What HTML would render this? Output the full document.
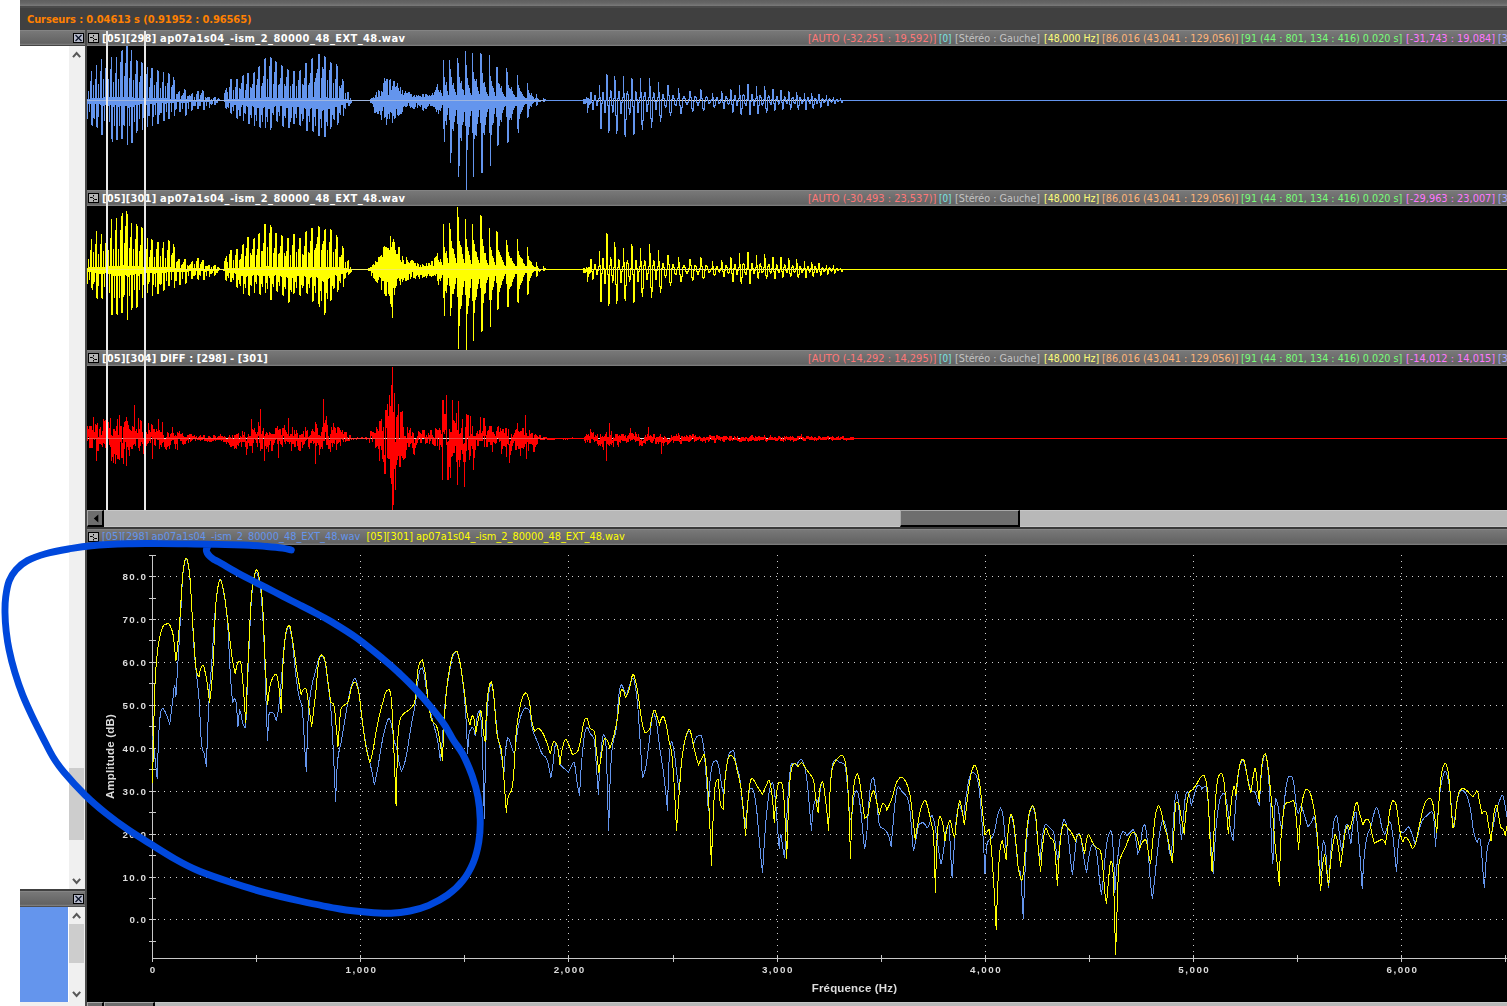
<!DOCTYPE html>
<html lang="fr"><head><meta charset="utf-8"><title>Curseurs</title>
<style>
html,body{margin:0;padding:0;background:#fff;}
body{width:1507px;height:1006px;position:relative;overflow:hidden;font-family:"DejaVu Sans Condensed","Liberation Sans",sans-serif;font-size:11px;}
.abs{position:absolute;}
.hdr{position:absolute;height:16px;background:linear-gradient(#848484 0,#848484 6.2%,#787878 6.3%,#636363 86%,#6a6a6a 91%,#7c7c7c 96%,#7c7c7c 100%);}
.t{position:absolute;white-space:pre;line-height:16px;height:16px;top:1px;}
.tb{font-weight:bold;color:#fff;font-size:11px;letter-spacing:.37px;}
.ib{position:absolute;top:3px;width:9px;height:8px;border:1px solid #000;background:#b4b4b4;}
.cb{position:absolute;top:3px;width:9px;height:8px;border:1px solid #000;background:#b6bacb;}
.r{font-size:11px;}
.c1{color:#ff7878}.c2{color:#78e6e6}.c3{color:#c4c4c4}.c4{color:#ffff78}.c5{color:#ffb478}.c6{color:#78ff78}.c7{color:#ff78ff}.c8{color:#a8a8ff}
.ax{font-family:"Liberation Sans",sans-serif;font-weight:bold;fill:#dcdcdc;}
</style></head><body>
<div class="abs" style="left:20px;top:0;width:1487px;height:6px;background:linear-gradient(#5f5f5f,#666 50%,#7a7a7a 100%)"></div><div class="abs" style="left:20px;top:6px;width:1487px;height:24px;background:#404040;border-top:2px solid #4b4b4b;box-sizing:border-box"></div><div class="abs" style="left:27px;top:12px;height:16px;line-height:16px;color:#ff8000;font-weight:bold;font-size:11px;letter-spacing:-0.1px;white-space:pre" id="curs">Curseurs : 0.04613 s (0.91952 : 0.96565)</div><div class="abs" style="left:69px;top:46px;width:16px;height:843px;background:#f0f0f0"></div><div class="abs" style="left:69px;top:768px;width:15px;height:72px;background:#cdcdcd"></div><div class="abs" style="left:69px;top:907px;width:16px;height:99px;background:#f0f0f0"></div><div class="abs" style="left:69px;top:924px;width:15px;height:39px;background:#cdcdcd"></div><div class="abs" style="left:20px;top:907px;width:48px;height:95px;background:#6495ed"></div><div class="abs" style="left:20px;top:1002px;width:49px;height:4px;background:#f0f0f0"></div><svg class="abs" style="left:0;top:0" width="90" height="1006"><path d="M73 57.1L76.6 53.1L80.2 57.1" fill="none" stroke="#585858" stroke-width="2.1"/><path d="M73 878.9L76.6 882.9L80.2 878.9" fill="none" stroke="#585858" stroke-width="2.1"/><path d="M73 918.1L76.6 914.1L80.2 918.1" fill="none" stroke="#585858" stroke-width="2.1"/><path d="M73 991.9L76.6 995.9L80.2 991.9" fill="none" stroke="#585858" stroke-width="2.1"/></svg><div class="hdr" style="left:20px;top:30px;width:65px;height:15px;border-bottom:1px solid #444"><div class="cb" style="left:53px"></div><svg class="abs" style="left:54px;top:4px" width="9" height="8"><path d="M1.5 1L7.5 7M7.5 1L1.5 7" stroke="#0c1428" stroke-width="1.25"/></svg></div><div class="hdr" style="left:87px;top:30px;width:1420px"><div class="ib" style="left:1px"></div><svg class="abs" style="left:2px;top:4px" width="9" height="8"><path d="M1 3.5H3.5L5.5 5.5H8M4.5 1V2.5M4.5 6V7.5" stroke="#000" stroke-width="1" fill="none"/></svg><span class="t tb" style="left:15px"><span style="letter-spacing:.21px">[05][298] </span><span style="letter-spacing:0.42px">ap07a1s04_-ism_2_80000_48_EXT_48.wav</span></span><span class="t r c1" style="left:721px;transform:scaleX(0.996);transform-origin:0 0">[AUTO (-32,251 : 19,592)]</span><span class="t r c2" style="left:852.3px;transform:scaleX(0.883);transform-origin:0 0">[0]</span><span class="t r c3" style="left:868.1px;transform:scaleX(0.974);transform-origin:0 0">[Stéréo : Gauche]</span><span class="t r c4" style="left:956.6px;transform:scaleX(0.949);transform-origin:0 0">[48,000 Hz]</span><span class="t r c5" style="left:1014.8px;transform:scaleX(0.985);transform-origin:0 0">[86,016 (43,041 : 129,056)]</span><span class="t r c6" style="left:1153.6px;transform:scaleX(0.973);transform-origin:0 0">[91 (44 : 801, 134 : 416) 0.020 s]</span><span class="t r c7" style="left:1319px;transform:scaleX(0.989);transform-origin:0 0">[-31,743 : 19,084]</span><span class="t r c8" style="left:1411.4px;transform:scaleX(0.95);transform-origin:0 0">[3</span></div><div class="hdr" style="left:87px;top:190px;width:1420px"><div class="ib" style="left:1px"></div><svg class="abs" style="left:2px;top:4px" width="9" height="8"><path d="M1 3.5H3.5L5.5 5.5H8M4.5 1V2.5M4.5 6V7.5" stroke="#000" stroke-width="1" fill="none"/></svg><span class="t tb" style="left:15px"><span style="letter-spacing:.21px">[05][301] </span><span style="letter-spacing:0.42px">ap07a1s04_-ism_2_80000_48_EXT_48.wav</span></span><span class="t r c1" style="left:721px;transform:scaleX(0.996);transform-origin:0 0">[AUTO (-30,493 : 23,537)]</span><span class="t r c2" style="left:852.3px;transform:scaleX(0.883);transform-origin:0 0">[0]</span><span class="t r c3" style="left:868.1px;transform:scaleX(0.974);transform-origin:0 0">[Stéréo : Gauche]</span><span class="t r c4" style="left:956.6px;transform:scaleX(0.949);transform-origin:0 0">[48,000 Hz]</span><span class="t r c5" style="left:1014.8px;transform:scaleX(0.985);transform-origin:0 0">[86,016 (43,041 : 129,056)]</span><span class="t r c6" style="left:1153.6px;transform:scaleX(0.973);transform-origin:0 0">[91 (44 : 801, 134 : 416) 0.020 s]</span><span class="t r c7" style="left:1319px;transform:scaleX(0.989);transform-origin:0 0">[-29,963 : 23,007]</span><span class="t r c8" style="left:1411.4px;transform:scaleX(0.95);transform-origin:0 0">[3</span></div><div class="hdr" style="left:87px;top:350px;width:1420px"><div class="ib" style="left:1px"></div><svg class="abs" style="left:2px;top:4px" width="9" height="8"><path d="M1 3.5H3.5L5.5 5.5H8M4.5 1V2.5M4.5 6V7.5" stroke="#000" stroke-width="1" fill="none"/></svg><span class="t tb" style="left:15px"><span style="letter-spacing:.21px">[05][304] </span><span style="letter-spacing:0.05px">DIFF : [298] - [301]</span></span><span class="t r c1" style="left:721px;transform:scaleX(0.996);transform-origin:0 0">[AUTO (-14,292 : 14,295)]</span><span class="t r c2" style="left:852.3px;transform:scaleX(0.883);transform-origin:0 0">[0]</span><span class="t r c3" style="left:868.1px;transform:scaleX(0.974);transform-origin:0 0">[Stéréo : Gauche]</span><span class="t r c4" style="left:956.6px;transform:scaleX(0.949);transform-origin:0 0">[48,000 Hz]</span><span class="t r c5" style="left:1014.8px;transform:scaleX(0.985);transform-origin:0 0">[86,016 (43,041 : 129,056)]</span><span class="t r c6" style="left:1153.6px;transform:scaleX(0.973);transform-origin:0 0">[91 (44 : 801, 134 : 416) 0.020 s]</span><span class="t r c7" style="left:1319px;transform:scaleX(0.989);transform-origin:0 0">[-14,012 : 14,015]</span><span class="t r c8" style="left:1411.4px;transform:scaleX(0.95);transform-origin:0 0">[3</span></div><div class="hdr" style="left:20px;top:889px;width:65px;height:18px;border-top:2px solid #404040;border-bottom:1px solid #505050;box-sizing:border-box"><div class="cb" style="left:53px;top:3px"></div><svg class="abs" style="left:54px;top:4px" width="9" height="8"><path d="M1.5 1L7.5 7M7.5 1L1.5 7" stroke="#0c1428" stroke-width="1.25"/></svg></div><div class="abs" style="left:85px;top:30px;width:2px;height:976px;background:#4a4a4a"></div><svg class="abs" style="left:0;top:0" width="1507" height="1006" viewBox="0 0 1507 1006"><rect x="87" y="46" width="1420" height="144" fill="#000"/><rect x="87" y="206" width="1420" height="144" fill="#000"/><rect x="87" y="366" width="1420" height="144" fill="#000"/><rect x="87" y="544" width="1420" height="458" fill="#000"/><g shape-rendering="crispEdges"><rect x="87" y="100" width="773" height="1" fill="#e4dccf"/><path d="M87.5 99V119M88.5 91V104M89.5 99V112M90.5 81V104M91.5 71V125M92.5 98V126M93.5 85V118M94.5 98V119M95.5 79V104M96.5 65V127M97.5 98V128M98.5 84V117M99.5 98V104M100.5 71V105M101.5 59V135M102.5 98V135M103.5 79V106M104.5 97V121M105.5 68V105M106.5 56V130M107.5 57V128M108.5 79V106M109.5 97V122M110.5 69V105M111.5 57V139M112.5 97V142M113.5 82V107M114.5 97V126M115.5 73V105M116.5 57V140M117.5 97V140M118.5 79V107M119.5 97V126M120.5 62V106M121.5 51V139M122.5 50V139M123.5 97V125M124.5 76V126M125.5 63V106M126.5 46V106M127.5 46V145M128.5 97V108M129.5 78V126M130.5 61V107M131.5 50V143M132.5 97V143M133.5 80V107M134.5 98V122M135.5 74V105M136.5 60V133M137.5 61V131M138.5 98V105M139.5 82V119M140.5 76V104M141.5 62V104M142.5 63V130M143.5 98V118M144.5 83V118M145.5 98V118M146.5 74V105M147.5 67V127M148.5 98V116M149.5 87V116M150.5 78V104M151.5 68V104M152.5 68V126M153.5 98V117M154.5 85V105M155.5 98V115M156.5 82V103M157.5 70V124M158.5 71V124M159.5 98V115M160.5 88V113M161.5 98V113M162.5 82V103M163.5 72V121M164.5 98V121M165.5 86V104M166.5 98V112M167.5 83V103M168.5 73V119M169.5 74V119M170.5 99V103M171.5 87V112M172.5 85V103M173.5 77V103M174.5 80V116M175.5 99V110M176.5 94V109M177.5 94V102M178.5 92V102M179.5 91V112M180.5 99V112M181.5 96V103M182.5 95V109M183.5 93V103M184.5 89V103M185.5 90V116M186.5 99V115M187.5 96V103M188.5 96V109M189.5 95V102M190.5 96V102M191.5 94V111M192.5 93V110M193.5 100V106M194.5 97V106M195.5 100V106M196.5 94V102M197.5 91V109M198.5 91V109M199.5 99V106M200.5 95V106M201.5 93V102M202.5 90V102M203.5 91V110M204.5 100V110M205.5 97V102M206.5 98V106M207.5 97V102M208.5 97V102M209.5 97V108M210.5 100V104M211.5 99V105M212.5 100V104M213.5 98V101M214.5 97V105M215.5 97V105M216.5 100V103M217.5 99V103M218.5 98V101M219.5 99V101M220.5 100V101M221.5 100V101M222.5 100V101M223.5 100V101M224.5 93V102M225.5 90V108M226.5 88V109M227.5 92V107M228.5 99V108M229.5 87V103M230.5 79V113M231.5 79V114M232.5 99V107M233.5 90V111M234.5 99V105M235.5 87V105M236.5 79V118M237.5 79V119M238.5 99V110M239.5 88V116M240.5 89V116M241.5 83V107M242.5 76V105M243.5 75V121M244.5 98V113M245.5 90V114M246.5 84V106M247.5 73V107M248.5 73V124M249.5 98V124M250.5 87V115M251.5 88V118M252.5 84V106M253.5 73V107M254.5 72V126M255.5 98V115M256.5 85V121M257.5 79V108M258.5 67V108M259.5 66V127M260.5 98V128M261.5 86V115M262.5 83V122M263.5 76V108M264.5 59V107M265.5 58V128M266.5 97V117M267.5 79V122M268.5 97V109M269.5 66V109M270.5 57V130M271.5 58V128M272.5 98V113M273.5 84V115M274.5 72V107M275.5 61V106M276.5 62V121M277.5 98V122M278.5 85V112M279.5 84V116M280.5 78V106M281.5 65V106M282.5 66V126M283.5 98V127M284.5 84V116M285.5 86V118M286.5 77V108M287.5 69V108M288.5 70V128M289.5 98V128M290.5 86V122M291.5 98V118M292.5 84V107M293.5 71V124M294.5 71V124M295.5 98V114M296.5 86V118M297.5 98V107M298.5 80V107M299.5 71V125M300.5 70V126M301.5 98V114M302.5 84V121M303.5 85V119M304.5 78V108M305.5 63V109M306.5 63V131M307.5 98V131M308.5 85V116M309.5 83V122M310.5 73V109M311.5 59V108M312.5 58V131M313.5 97V132M314.5 82V117M315.5 78V126M316.5 73V109M317.5 69V109M318.5 54V136M319.5 54V136M320.5 98V119M321.5 78V128M322.5 67V111M323.5 69V110M324.5 56V137M325.5 57V137M326.5 97V122M327.5 80V126M328.5 98V109M329.5 70V109M330.5 62V129M331.5 63V127M332.5 98V115M333.5 83V119M334.5 98V120M335.5 79V107M336.5 64V107M337.5 66V125M338.5 98V123M339.5 86V113M340.5 88V115M341.5 85V105M342.5 79V105M343.5 81V116M344.5 99V108M345.5 93V109M346.5 99V103M347.5 92V103M348.5 92V106M349.5 100V106M350.5 98V104M351.5 100V103M352.5 100V101M353.5 100V101M354.5 100V101M355.5 100V101M356.5 100V101M357.5 100V101M358.5 100V101M359.5 100V101M360.5 100V101M361.5 100V101M362.5 100V101M363.5 100V101M364.5 100V101M365.5 100V101M366.5 100V101M367.5 100V101M368.5 100V101M369.5 100V101M370.5 99V103M371.5 98V103M372.5 98V104M373.5 97V107M374.5 98V113M375.5 95V113M376.5 92V112M377.5 97V114M378.5 90V114M379.5 91V111M380.5 96V115M381.5 91V120M382.5 92V111M383.5 83V107M384.5 78V118M385.5 81V117M386.5 79V125M387.5 79V119M388.5 95V114M389.5 80V119M390.5 79V112M391.5 90V113M392.5 86V123M393.5 81V116M394.5 81V119M395.5 87V118M396.5 86V109M397.5 83V115M398.5 88V116M399.5 91V115M400.5 87V114M401.5 94V114M402.5 90V112M403.5 95V107M404.5 93V106M405.5 91V107M406.5 93V107M407.5 93V106M408.5 92V103M409.5 92V106M410.5 94V108M411.5 94V107M412.5 97V108M413.5 96V109M414.5 95V109M415.5 97V107M416.5 95V103M417.5 96V108M418.5 95V105M419.5 96V106M420.5 96V107M421.5 97V105M422.5 94V110M423.5 94V111M424.5 97V108M425.5 94V109M426.5 94V109M427.5 95V107M428.5 96V106M429.5 95V104M430.5 96V106M431.5 95V106M432.5 93V106M433.5 95V107M434.5 92V107M435.5 90V109M436.5 87V112M437.5 84V110M438.5 90V114M439.5 92V110M440.5 90V111M441.5 93V108M442.5 96V105M443.5 60V129M444.5 77V142M445.5 85V121M446.5 82V125M447.5 91V115M448.5 95V108M449.5 60V120M450.5 69V163M451.5 77V153M452.5 85V129M453.5 83V131M454.5 89V122M455.5 92V116M456.5 95V110M457.5 58V124M458.5 63V177M459.5 77V166M460.5 83V138M461.5 81V141M462.5 89V125M463.5 90V122M464.5 95V112M465.5 51V126M466.5 65V190M467.5 78V150M468.5 85V135M469.5 88V127M470.5 93V116M471.5 95V111M472.5 53V133M473.5 72V177M474.5 79V139M475.5 81V135M476.5 79V136M477.5 87V124M478.5 91V117M479.5 94V110M480.5 53V123M481.5 54V173M482.5 73V173M483.5 83V133M484.5 82V135M485.5 87V125M486.5 92V117M487.5 94V112M488.5 96V109M489.5 55V133M490.5 76V166M491.5 81V135M492.5 86V125M493.5 88V123M494.5 92V114M495.5 96V108M496.5 67V117M497.5 67V146M498.5 83V145M499.5 84V126M500.5 88V120M501.5 86V122M502.5 92V113M503.5 94V110M504.5 96V107M505.5 97V106M506.5 68V117M507.5 72V143M508.5 85V142M509.5 88V120M510.5 89V118M511.5 87V120M512.5 91V114M513.5 94V110M514.5 95V108M515.5 97V106M516.5 97V106M517.5 75V129M518.5 85V133M519.5 88V119M520.5 91V114M521.5 92V112M522.5 94V110M523.5 96V107M524.5 97V105M525.5 98V104M526.5 98V104M527.5 83V118M528.5 90V117M529.5 93V109M530.5 95V106M531.5 93V107M532.5 96V104M533.5 97V103M534.5 99V102M535.5 98V102M536.5 94V106M537.5 98V105M538.5 99V102M539.5 100V102M540.5 100V102M541.5 100V101M542.5 100V101M543.5 98V102M544.5 99V102M545.5 99V101M546.5 100V101M547.5 100V101M548.5 100V101M549.5 100V101M550.5 100V101M551.5 100V101M552.5 100V101M553.5 100V101M554.5 100V101M555.5 100V101M556.5 100V101M557.5 100V101M558.5 100V101M559.5 100V101M560.5 100V101M561.5 100V101M562.5 100V101M563.5 100V101M564.5 100V101M565.5 100V101M566.5 100V101M567.5 100V101M568.5 100V101M569.5 100V101M570.5 100V101M571.5 100V101M572.5 100V101M573.5 100V101M574.5 100V101M575.5 100V101M576.5 100V101M577.5 100V101M578.5 100V101M579.5 100V101M580.5 100V101M581.5 100V101M582.5 100V101M583.5 99V104M584.5 99V104M585.5 99V104M586.5 97V103M587.5 98V113M588.5 98V108M589.5 99V105M590.5 92V104M591.5 92V103M592.5 102V110M593.5 100V110M594.5 95V101M595.5 95V101M596.5 100V106M597.5 101V106M598.5 98V102M599.5 85V99M600.5 97V129M601.5 103V129M602.5 92V104M603.5 92V101M604.5 100V113M605.5 100V113M606.5 74V101M607.5 75V106M608.5 105V133M609.5 97V131M610.5 90V98M611.5 91V106M612.5 105V113M613.5 98V112M614.5 76V99M615.5 80V116M616.5 115V134M617.5 98V131M618.5 91V99M619.5 91V101M620.5 100V114M621.5 102V114M622.5 97V103M623.5 76V98M624.5 93V135M625.5 119V137M626.5 93V120M627.5 91V95M628.5 94V109M629.5 108V115M630.5 99V113M631.5 78V100M632.5 79V107M633.5 106V135M634.5 100V134M635.5 91V101M636.5 92V100M637.5 99V113M638.5 102V113M639.5 97V103M640.5 78V98M641.5 92V125M642.5 120V130M643.5 96V121M644.5 92V97M645.5 92V101M646.5 100V112M647.5 104V112M648.5 97V105M649.5 78V98M650.5 86V119M651.5 118V128M652.5 97V122M653.5 92V98M654.5 93V102M655.5 101V110M656.5 101V110M657.5 97V102M658.5 82V98M659.5 92V116M660.5 115V122M661.5 99V118M662.5 94V100M663.5 94V99M664.5 98V106M665.5 105V108M666.5 100V107M667.5 85V101M668.5 85V96M669.5 95V113M670.5 112V116M671.5 99V113M672.5 95V100M673.5 95V99M674.5 98V105M675.5 104V106M676.5 100V106M677.5 98V101M678.5 88V99M679.5 93V106M680.5 105V114M681.5 107V114M682.5 98V108M683.5 96V99M684.5 96V99M685.5 98V103M686.5 102V105M687.5 102V105M688.5 99V103M689.5 91V100M690.5 91V98M691.5 97V109M692.5 108V112M693.5 101V111M694.5 96V102M695.5 96V98M696.5 97V103M697.5 102V106M698.5 102V106M699.5 99V103M700.5 89V100M701.5 90V99M702.5 98V109M703.5 108V111M704.5 101V110M705.5 97V102M706.5 96V98M707.5 97V101M708.5 100V104M709.5 102V104M710.5 100V103M711.5 99V101M712.5 93V100M713.5 97V107M714.5 105V108M715.5 99V106M716.5 97V100M717.5 97V101M718.5 100V104M719.5 102V104M720.5 99V103M721.5 91V100M722.5 93V103M723.5 102V109M724.5 101V109M725.5 96V102M726.5 96V99M727.5 98V104M728.5 103V105M729.5 99V104M730.5 89V100M731.5 90V105M732.5 104V113M733.5 99V112M734.5 95V100M735.5 95V101M736.5 100V106M737.5 101V106M738.5 98V102M739.5 85V99M740.5 95V114M741.5 108V115M742.5 95V109M743.5 94V96M744.5 95V104M745.5 103V106M746.5 99V106M747.5 84V100M748.5 84V101M749.5 100V115M750.5 101V115M751.5 94V102M752.5 94V100M753.5 99V106M754.5 101V106M755.5 98V102M756.5 86V99M757.5 96V114M758.5 105V114M759.5 95V106M760.5 95V98M761.5 97V105M762.5 103V106M763.5 99V104M764.5 86V100M765.5 90V109M766.5 108V113M767.5 97V111M768.5 95V98M769.5 96V103M770.5 102V105M771.5 99V105M772.5 89V100M773.5 89V104M774.5 103V111M775.5 99V110M776.5 96V100M777.5 96V102M778.5 101V105M779.5 100V104M780.5 90V101M781.5 90V103M782.5 102V110M783.5 99V109M784.5 96V100M785.5 97V102M786.5 101V104M787.5 99V104M788.5 91V100M789.5 92V105M790.5 104V110M791.5 98V108M792.5 97V99M793.5 97V103M794.5 102V104M795.5 99V104M796.5 92V100M797.5 95V108M798.5 105V110M799.5 97V106M800.5 97V100M801.5 99V104M802.5 101V104M803.5 99V102M804.5 93V100M805.5 99V110M806.5 100V110M807.5 97V101M808.5 97V102M809.5 101V104M810.5 99V104M811.5 93V100M812.5 96V108M813.5 104V109M814.5 98V105M815.5 98V100M816.5 99V104M817.5 100V104M818.5 94V101M819.5 94V103M820.5 102V108M821.5 99V107M822.5 98V100M823.5 99V103M824.5 101V103M825.5 99V102M826.5 95V101M827.5 100V106M828.5 99V106M829.5 98V100M830.5 99V102M831.5 101V103M832.5 99V102M833.5 97V101M834.5 100V104M835.5 100V104M836.5 99V101M837.5 99V102M838.5 100V102M839.5 100V101M840.5 98V101M841.5 100V103M842.5 100V103M843.5 100V101M844.5 100V101M845.5 100V101M846.5 100V101M847.5 100V101M848.5 100V101M849.5 100V101M850.5 100V101M851.5 100V101M852.5 100V101M853.5 100V101M854.5 100V101M855.5 100V101M856.5 100V101M857.5 100V101M858.5 100V101M859.5 100V101" stroke="#6495ed" stroke-width="1" fill="none"/><rect x="860" y="100" width="647" height="1" fill="#6495ed"/><rect x="87" y="100" width="458" height="1" fill="#e4dccf" opacity="0.45"/></g><g shape-rendering="crispEdges"><rect x="87" y="269" width="773" height="1" fill="#e4dccf"/><path d="M87.5 268V284M88.5 259V272M89.5 267V280M90.5 250V272M91.5 239V288M92.5 267V290M93.5 252V284M94.5 267V282M95.5 244V273M96.5 231V298M97.5 267V299M98.5 254V286M99.5 267V274M100.5 244V274M101.5 234V298M102.5 267V299M103.5 251V274M104.5 267V287M105.5 243V273M106.5 224V300M107.5 224V299M108.5 250V274M109.5 266V293M110.5 238V274M111.5 219V315M112.5 266V315M113.5 249V276M114.5 266V298M115.5 230V276M116.5 218V314M117.5 266V315M118.5 249V276M119.5 266V298M120.5 230V276M121.5 216V313M122.5 213V313M123.5 265V297M124.5 243V295M125.5 226V275M126.5 211V276M127.5 214V320M128.5 266V277M129.5 248V296M130.5 237V275M131.5 223V310M132.5 266V308M133.5 249V275M134.5 266V290M135.5 239V274M136.5 224V308M137.5 226V307M138.5 266V276M139.5 251V290M140.5 245V274M141.5 227V274M142.5 228V298M143.5 267V285M144.5 253V284M145.5 267V283M146.5 249V273M147.5 238V293M148.5 267V284M149.5 257V282M150.5 250V273M151.5 239V273M152.5 240V296M153.5 267V285M154.5 257V274M155.5 267V287M156.5 249V273M157.5 242V294M158.5 242V294M159.5 267V284M160.5 256V285M161.5 267V284M162.5 248V273M163.5 242V291M164.5 267V290M165.5 258V273M166.5 267V281M167.5 250V272M168.5 240V286M169.5 241V286M170.5 267V272M171.5 255V280M172.5 253V272M173.5 244V272M174.5 247V288M175.5 268V281M176.5 262V281M177.5 261V272M178.5 259V272M179.5 259V285M180.5 268V285M181.5 265V272M182.5 264V279M183.5 262V272M184.5 259V272M185.5 259V284M186.5 269V283M187.5 265V272M188.5 266V276M189.5 265V271M190.5 264V271M191.5 262V279M192.5 261V279M193.5 268V276M194.5 264V276M195.5 268V275M196.5 261V271M197.5 258V279M198.5 258V280M199.5 268V275M200.5 264V276M201.5 262V271M202.5 260V271M203.5 260V280M204.5 269V280M205.5 266V272M206.5 266V276M207.5 266V271M208.5 265V271M209.5 265V277M210.5 269V274M211.5 267V274M212.5 269V273M213.5 266V271M214.5 265V276M215.5 265V275M216.5 269V273M217.5 267V273M218.5 267V271M219.5 268V270M220.5 269V270M221.5 269V270M222.5 269V270M223.5 269V271M224.5 261V271M225.5 258V280M226.5 256V281M227.5 262V276M228.5 268V278M229.5 254V273M230.5 250V282M231.5 250V282M232.5 268V278M233.5 260V280M234.5 268V273M235.5 255V274M236.5 249V287M237.5 249V288M238.5 268V280M239.5 260V284M240.5 259V286M241.5 254V276M242.5 245V276M243.5 244V294M244.5 267V284M245.5 256V288M246.5 248V277M247.5 237V276M248.5 237V295M249.5 267V296M250.5 253V285M251.5 255V286M252.5 249V276M253.5 239V275M254.5 238V293M255.5 267V282M256.5 255V284M257.5 249V275M258.5 234V276M259.5 233V294M260.5 267V295M261.5 251V284M262.5 251V287M263.5 243V276M264.5 224V276M265.5 224V293M266.5 266V283M267.5 247V289M268.5 266V276M269.5 233V278M270.5 225V300M271.5 227V300M272.5 267V284M273.5 253V287M274.5 248V276M275.5 233V275M276.5 233V291M277.5 267V292M278.5 254V282M279.5 253V286M280.5 246V276M281.5 235V277M282.5 236V295M283.5 267V296M284.5 253V287M285.5 256V289M286.5 251V277M287.5 238V278M288.5 238V303M289.5 267V302M290.5 255V290M291.5 267V292M292.5 245V278M293.5 234V294M294.5 234V293M295.5 267V282M296.5 252V288M297.5 267V276M298.5 249V276M299.5 238V295M300.5 238V296M301.5 267V285M302.5 254V288M303.5 255V286M304.5 246V276M305.5 232V277M306.5 231V293M307.5 267V294M308.5 252V284M309.5 253V288M310.5 241V278M311.5 228V277M312.5 228V302M313.5 267V301M314.5 250V286M315.5 248V293M316.5 244V277M317.5 237V278M318.5 226V304M319.5 227V307M320.5 267V291M321.5 250V301M322.5 244V281M323.5 241V282M324.5 230V315M325.5 229V313M326.5 267V293M327.5 250V299M328.5 267V279M329.5 242V278M330.5 229V301M331.5 230V300M332.5 267V286M333.5 252V289M334.5 267V288M335.5 249V275M336.5 235V276M337.5 237V292M338.5 267V290M339.5 257V281M340.5 257V283M341.5 255V274M342.5 246V274M343.5 248V287M344.5 268V279M345.5 262V278M346.5 268V273M347.5 261V272M348.5 260V275M349.5 269V274M350.5 267V273M351.5 269V272M352.5 269V270M353.5 269V270M354.5 269V270M355.5 269V270M356.5 269V270M357.5 269V270M358.5 269V270M359.5 269V270M360.5 269V270M361.5 269V270M362.5 269V270M363.5 269V270M364.5 269V270M365.5 269V270M366.5 269V270M367.5 269V270M368.5 268V271M369.5 268V271M370.5 267V271M371.5 267V276M372.5 265V273M373.5 264V278M374.5 265V279M375.5 261V281M376.5 262V282M377.5 262V283M378.5 257V280M379.5 257V277M380.5 256V278M381.5 255V290M382.5 257V281M383.5 247V281M384.5 246V294M385.5 247V296M386.5 247V296M387.5 248V282M388.5 248V294M389.5 250V296M390.5 236V304M391.5 247V307M392.5 242V318M393.5 239V288M394.5 242V295M395.5 250V288M396.5 254V286M397.5 254V279M398.5 247V278M399.5 247V281M400.5 260V285M401.5 262V279M402.5 256V282M403.5 260V280M404.5 264V278M405.5 264V281M406.5 257V281M407.5 260V280M408.5 262V280M409.5 263V274M410.5 261V279M411.5 260V277M412.5 260V272M413.5 261V278M414.5 263V278M415.5 263V279M416.5 266V276M417.5 263V275M418.5 264V277M419.5 267V279M420.5 265V275M421.5 267V275M422.5 264V278M423.5 265V277M424.5 266V277M425.5 266V276M426.5 263V278M427.5 266V276M428.5 263V274M429.5 263V276M430.5 265V276M431.5 261V277M432.5 261V276M433.5 266V276M434.5 258V275M435.5 257V276M436.5 256V274M437.5 253V281M438.5 260V285M439.5 262V279M440.5 259V281M441.5 262V278M442.5 265V275M443.5 224V298M444.5 247V316M445.5 253V291M446.5 251V293M447.5 258V285M448.5 263V278M449.5 223V286M450.5 229V316M451.5 241V308M452.5 248V294M453.5 249V294M454.5 254V289M455.5 258V284M456.5 263V278M457.5 207V297M458.5 217V349M459.5 241V326M460.5 245V309M461.5 247V306M462.5 254V295M463.5 259V287M464.5 263V281M465.5 219V295M466.5 239V350M467.5 247V314M468.5 251V306M469.5 255V298M470.5 260V288M471.5 264V279M472.5 224V301M473.5 240V341M474.5 244V313M475.5 251V300M476.5 252V297M477.5 257V289M478.5 260V284M479.5 263V279M480.5 215V288M481.5 216V332M482.5 239V331M483.5 246V303M484.5 253V294M485.5 253V293M486.5 260V283M487.5 263V280M488.5 265V277M489.5 228V300M490.5 247V327M491.5 250V300M492.5 256V290M493.5 258V287M494.5 262V281M495.5 265V276M496.5 231V283M497.5 232V310M498.5 250V309M499.5 252V292M500.5 255V288M501.5 257V285M502.5 260V281M503.5 262V279M504.5 265V276M505.5 266V274M506.5 240V284M507.5 245V307M508.5 252V307M509.5 256V289M510.5 258V287M511.5 258V286M512.5 261V282M513.5 263V279M514.5 264V277M515.5 266V274M516.5 266V274M517.5 239V302M518.5 251V303M519.5 255V289M520.5 257V285M521.5 258V283M522.5 259V281M523.5 263V277M524.5 264V275M525.5 266V273M526.5 266V273M527.5 247V295M528.5 256V294M529.5 260V281M530.5 261V278M531.5 262V276M532.5 265V273M533.5 266V272M534.5 267V271M535.5 267V271M536.5 262V277M537.5 266V276M538.5 268V271M539.5 269V272M540.5 269V271M541.5 269V270M542.5 269V270M543.5 266V271M544.5 268V271M545.5 268V270M546.5 269V270M547.5 269V270M548.5 269V270M549.5 269V270M550.5 269V270M551.5 269V270M552.5 269V270M553.5 269V270M554.5 269V270M555.5 269V270M556.5 269V270M557.5 269V270M558.5 269V270M559.5 269V270M560.5 269V270M561.5 269V270M562.5 269V270M563.5 269V270M564.5 269V270M565.5 269V270M566.5 269V270M567.5 269V270M568.5 269V270M569.5 269V270M570.5 269V270M571.5 269V270M572.5 269V270M573.5 269V270M574.5 269V270M575.5 269V270M576.5 269V270M577.5 269V270M578.5 269V270M579.5 269V270M580.5 269V270M581.5 269V270M582.5 269V270M583.5 268V273M584.5 268V273M585.5 269V273M586.5 267V272M587.5 268V282M588.5 267V277M589.5 267V274M590.5 259V273M591.5 259V272M592.5 271V280M593.5 269V279M594.5 264V270M595.5 264V270M596.5 269V275M597.5 270V275M598.5 266V271M599.5 251V267M600.5 265V302M601.5 273V302M602.5 258V274M603.5 258V269M604.5 268V284M605.5 269V284M606.5 233V270M607.5 234V275M608.5 274V306M609.5 265V304M610.5 257V266M611.5 259V276M612.5 275V283M613.5 267V281M614.5 242V268M615.5 247V285M616.5 284V304M617.5 267V301M618.5 259V268M619.5 260V270M620.5 269V283M621.5 271V283M622.5 266V272M623.5 248V267M624.5 262V299M625.5 285V301M626.5 262V286M627.5 260V264M628.5 263V277M629.5 276V282M630.5 268V280M631.5 244V269M632.5 246V275M633.5 274V303M634.5 269V302M635.5 260V270M636.5 260V269M637.5 268V282M638.5 271V282M639.5 266V272M640.5 248V267M641.5 261V293M642.5 288V297M643.5 265V289M644.5 260V266M645.5 261V270M646.5 269V280M647.5 273V280M648.5 266V274M649.5 244V267M650.5 253V288M651.5 287V298M652.5 265V292M653.5 260V266M654.5 261V271M655.5 270V280M656.5 270V280M657.5 266V271M658.5 250V267M659.5 261V287M660.5 286V293M661.5 268V289M662.5 263V269M663.5 263V268M664.5 267V276M665.5 275V278M666.5 269V276M667.5 255V270M668.5 255V265M669.5 264V283M670.5 282V286M671.5 268V283M672.5 264V269M673.5 264V268M674.5 267V274M675.5 273V275M676.5 269V275M677.5 267V270M678.5 257V268M679.5 262V275M680.5 274V282M681.5 276V282M682.5 267V277M683.5 265V268M684.5 265V268M685.5 267V272M686.5 271V274M687.5 271V274M688.5 268V272M689.5 259V269M690.5 259V266M691.5 265V278M692.5 277V281M693.5 270V280M694.5 265V271M695.5 265V267M696.5 266V272M697.5 271V275M698.5 271V275M699.5 268V272M700.5 257V269M701.5 258V267M702.5 266V278M703.5 277V279M704.5 270V278M705.5 265V271M706.5 265V267M707.5 266V270M708.5 269V273M709.5 271V273M710.5 269V272M711.5 268V270M712.5 261V269M713.5 266V275M714.5 274V276M715.5 268V275M716.5 266V269M717.5 266V270M718.5 269V272M719.5 270V273M720.5 268V271M721.5 260V269M722.5 262V272M723.5 271V277M724.5 270V277M725.5 265V271M726.5 265V268M727.5 267V273M728.5 272V274M729.5 268V273M730.5 257V269M731.5 258V274M732.5 273V282M733.5 268V282M734.5 264V269M735.5 264V270M736.5 269V275M737.5 270V275M738.5 267V271M739.5 253V268M740.5 264V282M741.5 277V284M742.5 264V278M743.5 263V265M744.5 264V273M745.5 272V275M746.5 268V275M747.5 252V269M748.5 252V270M749.5 269V284M750.5 270V284M751.5 263V271M752.5 263V269M753.5 268V274M754.5 270V274M755.5 267V271M756.5 255V268M757.5 265V278M758.5 272V279M759.5 264V273M760.5 263V267M761.5 266V273M762.5 271V273M763.5 267V272M764.5 254V268M765.5 258V276M766.5 275V279M767.5 266V277M768.5 264V267M769.5 264V272M770.5 271V274M771.5 268V273M772.5 257V269M773.5 257V272M774.5 271V279M775.5 268V279M776.5 264V269M777.5 265V271M778.5 270V273M779.5 269V273M780.5 257V270M781.5 257V272M782.5 271V278M783.5 267V277M784.5 264V268M785.5 265V271M786.5 270V273M787.5 268V273M788.5 258V269M789.5 260V274M790.5 273V277M791.5 267V276M792.5 265V268M793.5 266V272M794.5 271V273M795.5 268V272M796.5 259V269M797.5 263V277M798.5 274V278M799.5 266V275M800.5 266V269M801.5 268V273M802.5 270V273M803.5 268V271M804.5 261V269M805.5 268V278M806.5 269V278M807.5 266V270M808.5 266V271M809.5 270V273M810.5 268V272M811.5 262V269M812.5 264V276M813.5 272V277M814.5 266V273M815.5 266V269M816.5 268V273M817.5 269V273M818.5 263V270M819.5 263V272M820.5 271V276M821.5 268V275M822.5 267V269M823.5 268V272M824.5 270V272M825.5 268V271M826.5 265V270M827.5 269V275M828.5 268V274M829.5 267V269M830.5 268V271M831.5 270V272M832.5 268V271M833.5 265V270M834.5 269V274M835.5 269V273M836.5 268V270M837.5 268V271M838.5 269V271M839.5 269V270M840.5 268V270M841.5 269V272M842.5 269V272M843.5 269V270M844.5 269V270M845.5 269V270M846.5 269V270M847.5 269V270M848.5 269V270M849.5 269V270M850.5 269V270M851.5 269V270M852.5 269V270M853.5 269V270M854.5 269V270M855.5 269V270M856.5 269V270M857.5 269V270M858.5 269V270M859.5 269V270" stroke="#ffff00" stroke-width="1" fill="none"/><rect x="860" y="269" width="647" height="1" fill="#ffff00"/><rect x="87" y="269" width="458" height="1" fill="#e4dccf" opacity="0.45"/></g><g shape-rendering="crispEdges"><rect x="87" y="438" width="773" height="1" fill="#e4dccf"/><path d="M87.5 426V441M88.5 429V437M89.5 426V448M90.5 426V448M91.5 426V448M92.5 430V448M93.5 417V439M94.5 432V440M95.5 424V439M96.5 425V461M97.5 423V451M98.5 437V451M99.5 429V444M100.5 427V444M101.5 435V445M102.5 431V447M103.5 419V443M104.5 421V444M105.5 420V448M106.5 419V448M107.5 423V437M108.5 422V439M109.5 428V445M110.5 418V447M111.5 435V461M112.5 436V457M113.5 429V463M114.5 429V454M115.5 431V464M116.5 426V455M117.5 419V459M118.5 435V459M119.5 415V460M120.5 426V442M121.5 426V458M122.5 443V458M123.5 427V464M124.5 422V449M125.5 421V442M126.5 417V466M127.5 421V447M128.5 425V450M129.5 429V456M130.5 430V447M131.5 431V449M132.5 426V449M133.5 427V445M134.5 405V444M135.5 431V446M136.5 429V439M137.5 433V439M138.5 418V448M139.5 429V451M140.5 420V446M141.5 421V442M142.5 432V444M143.5 438V454M144.5 437V453M145.5 437V448M146.5 432V446M147.5 434V444M148.5 423V443M149.5 430V441M150.5 432V443M151.5 424V437M152.5 425V459M153.5 429V439M154.5 429V445M155.5 432V446M156.5 429V439M157.5 431V440M158.5 419V440M159.5 430V449M160.5 432V445M161.5 432V447M162.5 422V443M163.5 435V442M164.5 439V447M165.5 439V449M166.5 437V450M167.5 432V447M168.5 433V446M169.5 437V449M170.5 434V445M171.5 433V441M172.5 427V440M173.5 433V440M174.5 436V444M175.5 435V449M176.5 436V444M177.5 432V450M178.5 433V439M179.5 431V439M180.5 434V441M181.5 434V441M182.5 433V444M183.5 436V445M184.5 437V444M185.5 437V444M186.5 437V441M187.5 435V440M188.5 435V443M189.5 434V438M190.5 434V442M191.5 434V441M192.5 436V440M193.5 436V439M194.5 435V439M195.5 437V441M196.5 436V439M197.5 438V440M198.5 437V440M199.5 436V440M200.5 435V441M201.5 437V440M202.5 437V440M203.5 435V439M204.5 435V441M205.5 438V441M206.5 438V441M207.5 438V442M208.5 436V441M209.5 436V442M210.5 437V442M211.5 438V442M212.5 438V441M213.5 435V441M214.5 435V440M215.5 436V441M216.5 438V440M217.5 437V440M218.5 436V440M219.5 436V440M220.5 434V440M221.5 436V441M222.5 436V440M223.5 437V442M224.5 436V442M225.5 437V442M226.5 439V444M227.5 439V442M228.5 437V443M229.5 435V445M230.5 437V447M231.5 438V447M232.5 435V446M233.5 439V446M234.5 435V449M235.5 435V448M236.5 434V449M237.5 434V445M238.5 433V446M239.5 439V443M240.5 436V442M241.5 437V447M242.5 431V442M243.5 435V442M244.5 432V442M245.5 437V447M246.5 441V455M247.5 437V449M248.5 434V443M249.5 436V446M250.5 436V446M251.5 419V446M252.5 429V453M253.5 430V443M254.5 428V439M255.5 432V440M256.5 434V443M257.5 432V447M258.5 422V436M259.5 426V443M260.5 409V451M261.5 434V449M262.5 431V449M263.5 428V438M264.5 436V461M265.5 434V446M266.5 432V449M267.5 433V447M268.5 435V452M269.5 432V445M270.5 433V441M271.5 434V451M272.5 434V451M273.5 434V445M274.5 434V443M275.5 428V440M276.5 428V439M277.5 426V444M278.5 430V458M279.5 429V441M280.5 429V444M281.5 435V445M282.5 428V447M283.5 428V436M284.5 425V442M285.5 430V444M286.5 432V441M287.5 434V442M288.5 418V442M289.5 436V444M290.5 434V442M291.5 434V451M292.5 427V444M293.5 436V444M294.5 430V447M295.5 434V447M296.5 430V441M297.5 433V446M298.5 438V450M299.5 435V451M300.5 435V451M301.5 434V442M302.5 434V448M303.5 431V445M304.5 437V444M305.5 427V441M306.5 431V440M307.5 430V439M308.5 437V447M309.5 436V449M310.5 435V443M311.5 431V443M312.5 429V441M313.5 431V444M314.5 432V443M315.5 422V464M316.5 424V446M317.5 428V443M318.5 435V445M319.5 435V455M320.5 436V449M321.5 432V447M322.5 427V449M323.5 399V441M324.5 423V441M325.5 420V432M326.5 416V445M327.5 425V445M328.5 436V449M329.5 440V449M330.5 434V452M331.5 427V443M332.5 430V447M333.5 423V443M334.5 427V444M335.5 428V440M336.5 433V450M337.5 427V444M338.5 427V443M339.5 428V442M340.5 430V446M341.5 432V439M342.5 430V440M343.5 434V442M344.5 432V438M345.5 432V442M346.5 432V441M347.5 437V441M348.5 439V441M349.5 435V441M350.5 435V439M351.5 438V440M352.5 438V439M353.5 438V440M354.5 438V439M355.5 438V439M356.5 438V440M357.5 437V439M358.5 438V439M359.5 438V439M360.5 438V439M361.5 437V439M362.5 437V439M363.5 438V439M364.5 438V439M365.5 437V439M366.5 437V440M367.5 438V439M368.5 438V439M369.5 438V443M370.5 431V439M371.5 431V436M372.5 432V442M373.5 432V439M374.5 433V439M375.5 433V448M376.5 427V447M377.5 429V446M378.5 431V449M379.5 421V461M380.5 421V446M381.5 419V450M382.5 431V459M383.5 427V462M384.5 455V474M385.5 410V474M386.5 410V428M387.5 404V458M388.5 416V459M389.5 395V459M390.5 406V478M391.5 385V484M392.5 367V510M393.5 412V505M394.5 393V469M395.5 442V490M396.5 417V465M397.5 415V460M398.5 404V456M399.5 439V467M400.5 412V467M401.5 412V456M402.5 411V458M403.5 427V460M404.5 436V459M405.5 436V458M406.5 438V450M407.5 427V443M408.5 433V447M409.5 430V447M410.5 428V444M411.5 436V443M412.5 432V448M413.5 433V454M414.5 443V455M415.5 439V448M416.5 438V445M417.5 436V443M418.5 431V440M419.5 432V438M420.5 433V443M421.5 434V443M422.5 430V438M423.5 430V438M424.5 430V439M425.5 437V444M426.5 435V443M427.5 437V443M428.5 433V439M429.5 435V444M430.5 430V441M431.5 430V439M432.5 435V444M433.5 437V445M434.5 438V446M435.5 428V446M436.5 429V439M437.5 430V446M438.5 430V438M439.5 428V450M440.5 430V445M441.5 434V447M442.5 400V480M443.5 400V432M444.5 414V434M445.5 414V430M446.5 395V445M447.5 442V480M448.5 441V480M449.5 429V467M450.5 432V478M451.5 432V457M452.5 400V456M453.5 420V453M454.5 421V453M455.5 423V446M456.5 413V462M457.5 430V485M458.5 401V460M459.5 434V467M460.5 433V460M461.5 428V450M462.5 419V454M463.5 444V462M464.5 443V487M465.5 427V462M466.5 414V451M467.5 415V438M468.5 415V450M469.5 436V460M470.5 416V456M471.5 434V446M472.5 426V449M473.5 436V470M474.5 436V458M475.5 436V450M476.5 433V440M477.5 431V446M478.5 434V446M479.5 430V441M480.5 417V441M481.5 433V441M482.5 431V441M483.5 418V436M484.5 418V447M485.5 426V436M486.5 435V447M487.5 431V447M488.5 430V442M489.5 426V442M490.5 426V445M491.5 426V445M492.5 432V452M493.5 432V442M494.5 434V443M495.5 436V444M496.5 431V443M497.5 427V438M498.5 426V439M499.5 432V442M500.5 428V441M501.5 431V454M502.5 429V449M503.5 429V446M504.5 433V446M505.5 428V447M506.5 428V457M507.5 436V444M508.5 429V445M509.5 444V463M510.5 441V455M511.5 434V451M512.5 437V446M513.5 435V443M514.5 433V441M515.5 430V450M516.5 429V450M517.5 423V446M518.5 431V449M519.5 432V449M520.5 431V456M521.5 431V448M522.5 428V448M523.5 428V449M524.5 435V447M525.5 415V444M526.5 433V459M527.5 436V442M528.5 436V451M529.5 430V444M530.5 434V444M531.5 433V444M532.5 433V445M533.5 438V452M534.5 435V452M535.5 434V447M536.5 435V445M537.5 436V444M538.5 437V439M539.5 435V439M540.5 435V440M541.5 438V440M542.5 438V440M543.5 437V440M544.5 437V440M545.5 437V439M546.5 437V439M547.5 438V440M548.5 438V440M549.5 438V440M550.5 438V440M551.5 438V440M552.5 438V440M553.5 438V440M554.5 438V440M555.5 438V439M556.5 438V439M557.5 438V439M558.5 438V439M559.5 438V439M560.5 438V439M561.5 438V439M562.5 438V439M563.5 438V440M564.5 438V439M565.5 438V440M566.5 438V439M567.5 438V440M568.5 438V439M569.5 438V439M570.5 438V439M571.5 438V439M572.5 437V439M573.5 438V439M574.5 438V439M575.5 438V439M576.5 438V439M577.5 438V439M578.5 438V439M579.5 438V439M580.5 438V439M581.5 438V439M582.5 438V439M583.5 438V439M584.5 437V441M585.5 436V443M586.5 434V440M587.5 435V442M588.5 434V440M589.5 436V443M590.5 429V443M591.5 432V439M592.5 433V439M593.5 432V440M594.5 437V442M595.5 435V441M596.5 436V441M597.5 434V444M598.5 440V446M599.5 440V445M600.5 434V446M601.5 437V444M602.5 436V447M603.5 437V450M604.5 436V441M605.5 434V441M606.5 432V461M607.5 437V444M608.5 437V445M609.5 423V446M610.5 435V444M611.5 431V445M612.5 440V443M613.5 437V447M614.5 438V441M615.5 434V441M616.5 434V441M617.5 434V445M618.5 436V447M619.5 435V442M620.5 436V443M621.5 434V440M622.5 434V441M623.5 434V441M624.5 436V441M625.5 435V441M626.5 438V443M627.5 436V442M628.5 435V442M629.5 433V439M630.5 428V441M631.5 433V440M632.5 433V440M633.5 434V439M634.5 436V440M635.5 432V442M636.5 434V441M637.5 437V441M638.5 434V441M639.5 437V446M640.5 440V445M641.5 439V446M642.5 441V446M643.5 440V443M644.5 437V443M645.5 435V444M646.5 437V441M647.5 434V441M648.5 427V440M649.5 436V440M650.5 435V442M651.5 436V443M652.5 437V443M653.5 434V441M654.5 434V439M655.5 438V444M656.5 437V444M657.5 437V442M658.5 437V444M659.5 436V442M660.5 434V442M661.5 437V454M662.5 437V443M663.5 439V446M664.5 436V443M665.5 437V442M666.5 438V442M667.5 439V445M668.5 440V444M669.5 439V443M670.5 438V442M671.5 435V441M672.5 437V440M673.5 436V443M674.5 436V441M675.5 436V441M676.5 434V441M677.5 436V441M678.5 433V441M679.5 435V442M680.5 440V444M681.5 436V444M682.5 436V441M683.5 437V441M684.5 436V441M685.5 437V441M686.5 435V441M687.5 436V441M688.5 437V442M689.5 435V442M690.5 435V441M691.5 436V440M692.5 434V438M693.5 434V439M694.5 436V442M695.5 435V441M696.5 437V441M697.5 437V440M698.5 437V440M699.5 436V439M700.5 437V441M701.5 438V441M702.5 438V442M703.5 437V441M704.5 437V441M705.5 438V443M706.5 437V440M707.5 437V440M708.5 437V442M709.5 435V441M710.5 435V438M711.5 436V440M712.5 436V440M713.5 436V440M714.5 436V443M715.5 438V443M716.5 435V440M717.5 435V439M718.5 436V440M719.5 436V440M720.5 437V441M721.5 437V439M722.5 437V441M723.5 436V442M724.5 436V442M725.5 436V440M726.5 436V440M727.5 437V439M728.5 438V440M729.5 436V441M730.5 436V441M731.5 436V440M732.5 438V441M733.5 439V440M734.5 436V440M735.5 437V440M736.5 438V440M737.5 436V441M738.5 439V441M739.5 439V442M740.5 438V442M741.5 437V442M742.5 437V441M743.5 437V441M744.5 438V441M745.5 437V441M746.5 437V439M747.5 438V441M748.5 438V442M749.5 437V441M750.5 436V441M751.5 435V441M752.5 435V440M753.5 437V440M754.5 438V441M755.5 436V441M756.5 437V441M757.5 437V441M758.5 436V440M759.5 436V441M760.5 437V440M761.5 437V440M762.5 437V440M763.5 437V440M764.5 435V439M765.5 437V441M766.5 439V442M767.5 439V441M768.5 438V440M769.5 437V440M770.5 435V440M771.5 437V440M772.5 437V440M773.5 438V440M774.5 437V440M775.5 437V441M776.5 438V441M777.5 438V441M778.5 436V440M779.5 436V439M780.5 437V441M781.5 439V441M782.5 437V441M783.5 439V442M784.5 436V440M785.5 437V441M786.5 436V439M787.5 437V440M788.5 437V440M789.5 437V440M790.5 436V441M791.5 437V440M792.5 436V440M793.5 437V442M794.5 438V441M795.5 438V441M796.5 438V441M797.5 436V440M798.5 436V440M799.5 436V438M800.5 436V439M801.5 434V438M802.5 437V440M803.5 437V441M804.5 438V441M805.5 438V441M806.5 436V439M807.5 436V439M808.5 436V439M809.5 437V440M810.5 437V440M811.5 436V440M812.5 437V440M813.5 438V440M814.5 437V441M815.5 437V440M816.5 438V441M817.5 438V440M818.5 436V440M819.5 436V439M820.5 437V440M821.5 438V440M822.5 437V440M823.5 437V440M824.5 437V440M825.5 437V440M826.5 437V440M827.5 436V439M828.5 436V440M829.5 437V438M830.5 437V439M831.5 437V440M832.5 436V441M833.5 437V440M834.5 438V440M835.5 438V440M836.5 437V440M837.5 437V440M838.5 436V440M839.5 438V440M840.5 437V440M841.5 437V439M842.5 436V439M843.5 436V440M844.5 438V440M845.5 438V440M846.5 438V441M847.5 438V440M848.5 438V440M849.5 438V440M850.5 437V440M851.5 437V440M852.5 437V440M853.5 437V440M854.5 438V439M855.5 438V439M856.5 438V439M857.5 438V439M858.5 438V439M859.5 438V439" stroke="#ff0000" stroke-width="1" fill="none"/><rect x="860" y="438" width="647" height="1" fill="#ff0000"/><rect x="87" y="438" width="458" height="1" fill="#e4dccf" opacity="0.3"/></g><rect x="106" y="31" width="2" height="479" fill="#e8e8e8"/><rect x="144" y="31" width="2" height="479" fill="#e8e8e8"/><g stroke="#d0d0d0" stroke-width="1" stroke-dasharray="1 5" shape-rendering="crispEdges"><path d="M158 576.5H1507"/><path d="M158 619.5H1507"/><path d="M158 662.5H1507"/><path d="M158 705.5H1507"/><path d="M158 748.5H1507"/><path d="M158 791.5H1507"/><path d="M158 834.5H1507"/><path d="M158 877.5H1507"/><path d="M158 919.5H1507"/><path d="M360.5 555V958"/><path d="M568.5 555V958"/><path d="M777.5 555V958"/><path d="M985.5 555V958"/><path d="M1193.5 555V958"/><path d="M1401.5 555V958"/></g><g stroke="#c8c8c8" stroke-width="1" shape-rendering="crispEdges" fill="none"><path d="M152.5 556V962M149 555.5H156M152 958.5H1507"/><path d="M149 576.5H156"/><path d="M149 619.5H156"/><path d="M149 662.5H156"/><path d="M149 705.5H156"/><path d="M149 748.5H156"/><path d="M149 791.5H156"/><path d="M149 834.5H156"/><path d="M149 877.5H156"/><path d="M149 919.5H156"/><path d="M149 598.5H156"/><path d="M149 640.5H156"/><path d="M149 683.5H156"/><path d="M149 726.5H156"/><path d="M149 769.5H156"/><path d="M149 812.5H156"/><path d="M149 855.5H156"/><path d="M149 898.5H156"/><path d="M149 941.5H156"/><path d="M256.5 955V962"/><path d="M360.5 955V962"/><path d="M464.5 955V962"/><path d="M568.5 955V962"/><path d="M673.5 955V962"/><path d="M777.5 955V962"/><path d="M881.5 955V962"/><path d="M985.5 955V962"/><path d="M1089.5 955V962"/><path d="M1193.5 955V962"/><path d="M1297.5 955V962"/><path d="M1401.5 955V962"/><path d="M1505.5 955V962"/></g><polyline points="152.6,736.1 157.2,778.8 158.2,746.8 159.3,723.9 160.3,714.9 161.3,710.1 162.4,708.2 163.4,708.8 164.4,710.3 165.5,712.4 166.5,714.8 167.5,717.4 168.6,720.7 169.6,724.5 170.7,716.8 171.7,708.7 172.8,700.3 173.8,689.3 174.8,685 175.9,697.4 176.9,680.6 177.9,663.2 179,645.1 180,626.7 181,608 182,587.3 183,572.7 184,565.8 185.1,560.6 186.1,558.3 187.1,559.8 188.1,564.4 189.1,570.8 190.1,580.6 191.2,596.9 192.2,615.6 193.2,633.9 194.2,650.8 195.2,661.9 196.2,671.5 197.2,681.2 198.3,690.6 199.3,702.5 200.3,723.4 201.3,743 202.3,749 203.3,751.4 204.4,754.5 205.4,760 206.4,767.2 207.4,737.3 208.4,712.2 209.4,693.3 210.4,678.9 211.5,666 212.5,651.6 213.5,635.3 214.5,619.5 215.5,606.6 216.5,598.1 217.5,590.4 218.5,584.1 219.6,580 220.6,579.1 221.6,581.8 222.6,586.6 223.6,592.2 224.6,597.7 225.6,604.3 226.6,612.5 227.6,622.9 228.7,641.4 229.7,663.9 230.7,679.8 231.7,692.6 232.7,702.5 233.7,699.5 234.8,698.7 235.8,700.2 236.9,710.7 237.9,727.1 238.9,715.7 239.8,710.4 240.8,713 241.8,719.4 242.8,723.6 243.8,725.7 244.7,727.3 245.7,727.9 246.7,702.8 247.7,679.5 248.7,656.2 249.7,632.4 250.7,611.2 251.7,595.6 252.7,587 253.7,580.1 254.7,574.9 255.7,572.2 256.6,572.4 257.6,574.5 258.6,577.9 259.6,582.3 260.6,588.6 261.6,599.5 262.6,614.2 263.6,631.9 264.6,656.9 265.6,689.3 266.6,716.4 267.6,741.3 268.6,716 269.5,712.9 270.5,712.9 271.4,712.9 272.4,712.9 273.3,713.2 274.3,714.8 275.2,717.5 276.2,720.6 277.2,716.4 278.2,710.4 279.2,703.1 280.2,693.8 281.2,682.1 282.2,669.8 283.2,655.5 284.3,644.1 285.3,638 286.3,632.8 287.3,628.8 288.3,626.6 289.3,626.7 290.3,629.9 291.3,635.1 292.3,641.2 293.3,650.5 294.3,661.7 295.3,670.7 296.3,678.9 297.3,686.4 298.3,692.9 299.4,697.7 300.4,701 301.4,704.3 302.4,709.4 303.4,722.8 304.4,742.9 305.4,758.3 306.4,771.8 307.4,734.5 308.4,712.6 309.4,701.6 310.4,693.8 311.4,687.9 312.4,682.9 313.4,678.8 314.5,675.3 315.5,671.6 316.5,667.3 317.5,662.6 318.5,658.9 319.5,657.1 320.5,656.4 321.5,656 322.5,656.3 323.5,657.8 324.5,660 325.5,664.3 326.5,671.5 327.5,679.9 328.6,688.2 329.6,696.2 330.6,705.4 331.6,718.3 332.6,736.3 333.6,756.5 334.6,778.1 335.6,802.1 336.6,775.7 337.6,760.3 338.6,753.5 339.6,748.9 340.6,744.9 341.6,739.8 342.6,733.9 343.6,727.9 344.6,721.8 345.5,715.8 346.5,710.1 347.5,704.3 348.5,698.5 349.5,693.3 350.5,689.2 351.5,685.5 352.5,682.1 353.5,679.5 354.5,678.1 355.5,678.6 356.5,680.9 357.5,684.5 358.5,688.9 359.5,696.8 360.5,706.8 361.5,716.4 362.5,723.7 363.5,730.1 364.5,736 365.4,741.6 366.4,746.8 367.4,751.7 368.4,756.5 369.4,760.7 370.4,764.7 371.4,769.2 372.4,774.1 373.4,779.5 374.4,785.3 375.4,780.5 376.4,775.5 377.4,770.2 378.4,764.4 379.4,758.1 380.4,751.6 381.5,745.4 382.5,739.9 383.5,735.1 384.5,730.7 385.5,726.7 386.5,723.5 387.5,720.7 388.5,718.5 389.5,718.3 390.5,721 391.5,725.1 392.5,730.4 393.5,737.2 394.5,742.2 395.6,745.1 396.6,747.9 397.6,752.6 398.6,759.4 399.6,764.9 400.6,768.6 401.6,771.2 402.6,769.1 403.6,766.4 404.6,763 405.6,759.3 406.6,754.5 407.6,748.7 408.6,742.2 409.6,735.6 410.6,729.4 411.5,723.9 412.5,718.7 413.5,713.6 414.5,708.3 415.5,702.5 416.5,695.3 417.5,685.7 418.5,676.6 419.5,670.9 420.5,669.2 421.5,668.1 422.5,667.9 423.5,671.3 424.5,677.1 425.5,682.9 426.5,689.8 427.5,697 428.5,703.5 429.5,708.4 430.5,712.4 431.4,716.1 432.4,719.8 433.4,723.6 434.4,727.3 435.4,730.9 436.4,734.9 437.4,739.5 438.4,745.2 439.4,752.6 440.4,760.9 441.4,749.8 442.4,738.2 443.4,725.7 444.4,711.5 445.4,699.1 446.4,690.7 447.5,684 448.5,678.1 449.5,672.4 450.5,666.5 451.5,661.1 452.5,656.9 453.5,654.6 454.5,653.1 455.5,652 456.5,651.5 457.5,652.7 458.5,656.5 459.5,661.5 460.5,666.5 461.6,672.7 462.6,680.1 463.6,688.6 464.6,698.9 465.6,712 466.6,729 467.6,754.4 468.6,736.6 469.5,731.8 470.5,729.4 471.5,728 472.4,727.3 473.4,728.1 474.3,731.4 475.3,736.3 476.3,723.8 477.3,715.8 478.3,711.5 479.3,710.6 480.4,714.5 481.4,723.5 482.4,745.3 483.4,785.1 484.4,819.1 485.4,759.9 486.4,728 487.5,706.5 488.5,695.5 489.5,688.8 490.5,684.4 491.5,683.5 492.6,687.8 493.6,695.6 494.6,704.6 495.6,715.3 496.7,727.9 497.7,736.1 498.7,741 499.7,745.7 500.7,751.8 501.8,758.8 502.8,766.6 503.8,775.1 504.8,758.5 505.8,748.1 506.7,741.7 507.7,738 508.7,738.1 509.7,740.7 510.7,744.1 511.7,747.1 512.6,749.6 513.6,752 514.6,754.4 515.6,745.4 516.6,737.4 517.6,730.7 518.6,725.4 519.6,720.7 520.6,716.7 521.6,713.7 522.6,711.6 523.6,709.8 524.7,708.4 525.7,707.9 526.7,708.1 527.7,708.6 528.7,709.4 529.7,710.6 530.7,716.8 531.7,725.6 532.7,730.4 533.7,733.4 534.7,735.7 535.7,737.8 536.7,739.9 537.7,742.3 538.7,745.1 539.7,748.1 540.7,750.8 541.8,753.1 542.8,754.7 543.8,755.7 544.8,756.5 545.8,757.4 546.8,759.1 547.8,762.2 548.8,766.5 549.8,771.6 550.8,778.2 551.8,772.3 552.8,765.8 553.7,757.1 554.7,747.5 555.7,744.1 556.7,745.5 557.6,748.2 558.6,752.4 559.6,759.7 560.6,764.8 561.6,766.2 562.5,767.1 563.5,767.9 564.5,768.7 565.5,769.7 566.4,770.6 567.4,771.6 568.4,772.5 569.4,770.4 570.4,768.5 571.4,766.6 572.4,764.3 573.4,762.6 574.5,762.9 575.5,769.8 576.5,778.7 577.5,785 578.5,790.7 579.5,795.8 580.5,778.1 581.5,763.3 582.5,752.1 583.5,742.2 584.5,734.6 585.5,730.3 586.5,727.8 587.5,727.5 588.5,729.3 589.4,731.8 590.4,733.9 591.4,735.1 592.4,736 593.4,737.3 594.4,739.8 595.4,750.9 596.4,766.8 597.4,780.7 598.4,794.5 599.4,773.3 600.5,757.2 601.5,746.1 602.5,737.5 603.5,735 604.6,735.9 605.6,738.1 606.6,756.9 607.7,800 608.7,830.7 609.7,791.5 610.7,767.6 611.7,752.6 612.7,744.2 613.7,739.5 614.7,736.1 615.7,731.9 616.7,724.1 617.7,709.1 618.6,696.1 619.6,690.1 620.6,685.8 621.6,684.7 622.6,686.4 623.6,688.9 624.6,691 625.6,693 626.6,695 627.6,691.7 628.6,688.7 629.6,685.9 630.5,682.9 631.5,680.1 632.5,678.4 633.5,678.7 634.5,682 635.5,687.6 636.5,694.5 637.5,702.8 638.5,715.7 639.4,730.3 640.4,744.9 641.4,760.7 642.4,777.6 643.4,775.8 644.4,772.8 645.4,769 646.4,763.6 647.4,756.1 648.4,747.7 649.4,739.9 650.4,731.4 651.4,722.3 652.4,715.3 653.4,713 654.4,714.7 655.5,717.9 656.5,722.1 657.5,729.2 658.5,737.9 659.5,746.2 660.5,753.1 661.5,759.4 662.5,765.8 663.5,772.9 664.5,781.1 665.5,790.1 666.5,800 667.5,810.5 668.5,770.9 669.4,754.8 670.4,745.2 671.4,741.4 672.3,743 673.3,747 674.3,752 675.2,759.8 676.2,768.7 677.2,776.4 678.1,783.6 679.1,790.6 680.1,777.7 681.1,766.4 682.1,756.9 683.2,749.5 684.2,743.4 685.2,738.9 686.2,736.1 687.2,733.8 688.2,732 689.2,731.1 690.3,731.8 691.3,734.7 692.3,739.3 693.3,745.3 694.3,742.1 695.3,739.4 696.3,737.3 697.3,736.2 698.3,735.7 699.3,735.3 700.3,735.1 701.3,735.1 702.3,738.6 703.3,745.1 704.3,753.1 705.3,765.2 706.3,778.9 707.3,793.7 708.3,810.5 709.3,791.1 710.3,777 711.4,769.3 712.4,764 713.4,762 714.4,761.3 715.4,761 716.5,760.8 717.5,762 718.5,765.6 719.5,770.2 720.5,777.6 721.6,785.3 722.6,790.5 723.6,794.4 724.6,782.6 725.6,772.8 726.7,765.7 727.7,759.6 728.7,755 729.7,752.8 730.7,751.8 731.8,751 732.8,750.6 733.8,751.1 734.8,756.2 735.8,762.6 736.8,766.7 737.9,770.2 738.9,773.9 739.9,778.9 740.9,787.6 741.9,799 743,809.2 744,818.7 745,828 746,818.5 747,809.9 747.9,802.1 748.9,793.9 749.9,788.4 750.9,788.1 751.8,788.6 752.8,789.3 753.8,791.7 754.8,796.5 755.8,802.9 756.7,810.2 757.7,820.6 758.7,833.7 759.7,844.9 760.6,854.8 761.6,864 762.6,872.5 763.6,854.2 764.6,838.8 765.5,825.9 766.5,814.8 767.5,805.2 768.5,796.3 769.4,789.9 770.4,786.7 771.4,784.2 772.4,782.9 773.3,784.4 774.3,790.7 775.3,798.8 776.3,810.6 777.2,823.6 778.2,835.9 779.2,848.7 780.3,834.6 781.4,836.2 782.4,845.7 783.5,852.2 784.6,857.8 785.6,839.4 786.6,821.3 787.6,802 788.7,785.3 789.7,774.7 790.7,766.4 791.7,763.4 792.7,763.4 793.8,763.4 794.8,763.5 795.8,764.3 796.8,765.5 797.8,762.8 798.8,761 799.7,760 800.7,759.5 801.7,759.8 802.7,761.2 803.7,763.6 804.6,766.4 805.6,771.1 806.6,777.7 807.6,785.7 808.6,796.4 809.5,808.1 810.5,819.4 811.5,831.1 812.5,814.7 813.6,805 814.6,801.7 815.6,799.8 816.6,799.8 817.7,801.5 818.7,804.8 819.7,794.3 820.7,787.3 821.7,783.2 822.7,781.5 823.7,785.2 824.6,792.7 825.6,800.3 826.6,808.7 827.6,818.4 828.6,829.3 829.6,799.5 830.6,781.4 831.6,770.7 832.6,764.3 833.6,761.6 834.7,760 835.7,759.5 836.7,759.9 837.7,760.7 838.7,761.6 839.7,762.3 840.7,762.7 841.7,763 842.7,763.4 843.7,764 844.8,765 845.8,770.4 846.8,779.8 847.8,790.4 848.8,804 849.8,820.3 850.8,818.6 851.8,815.3 852.7,808 853.7,798.3 854.7,793.7 855.7,791.7 856.7,790.7 857.6,791.5 858.6,795.6 859.6,801.6 860.6,808.4 861.6,818.3 862.5,829 863.5,838.8 864.5,848.7 865.5,844.3 866.5,836.8 867.5,824.6 868.5,808.1 869.4,796.1 870.4,786.5 871.4,780.1 872.4,778.3 873.4,777.6 874.4,780.6 875.4,788.4 876.4,796.6 877.4,807.1 878.3,818 879.3,825 880.3,826.7 881.3,827.5 882.3,828.1 883.3,828.6 884.3,829.4 885.3,830.3 886.3,831.4 887.2,832.9 888.2,834.7 889.2,837.7 890.2,841.9 891.2,846.8 892.2,834.1 893.2,822.4 894.2,811.1 895.2,800.8 896.2,793.5 897.3,788 898.3,786.7 899.3,787.4 900.3,788.8 901.3,790.4 902.3,791.8 903.3,792.9 904.3,793.8 905.3,794.9 906.3,796.1 907.3,797.9 908.4,800.9 909.4,806.2 910.4,813.7 911.4,827.4 912.4,840.1 913.4,851.2 914.4,847 915.3,842.7 916.3,838.1 917.3,832.1 918.2,826.6 919.2,824 920.1,823.5 921.1,823.1 922.1,822.9 923,822.8 924,823.2 925,824.4 925.9,826 926.9,828 927.9,827.2 928.9,825.4 929.9,822.3 931,816.4 932,815.3 933,817.7 934,821.1 935,825.9 936,832.5 937,839.3 938.1,846.7 939.1,853.7 940.1,859.4 941.1,864.2 942.1,859.3 943.1,853.6 944.1,846.7 945.1,837.3 946.1,829.9 947.2,826.8 948.2,824.6 949.2,825.4 950.2,844.6 951.2,863 952.2,878.4 953.2,861.4 954.3,845.9 955.3,830.5 956.3,818.3 957.4,811.2 958.4,806.1 959.5,804.8 960.5,806.9 961.5,810.3 962.6,814.1 963.6,818.9 964.6,808.7 965.6,799.9 966.7,792.6 967.7,786.1 968.7,780.7 969.7,776.9 970.7,773.9 971.8,772.1 972.8,772 973.8,772.6 974.8,773.5 975.8,774.8 976.8,777 977.9,781.4 978.9,787.1 979.9,796.3 980.9,807.9 981.9,820.7 983,835.8 984,853.3 985,873.7 986,854.7 987,844.6 987.9,841.8 988.9,840.2 989.9,839.1 990.9,838.5 991.8,837.9 992.8,837 993.8,834.2 994.8,829.6 995.8,825 996.7,819.7 997.7,814.8 998.7,811.7 999.7,809.1 1000.6,808.1 1001.6,809.8 1002.6,813.7 1003.6,819.9 1004.5,831.7 1005.5,842.5 1006.5,852.5 1007.5,837.9 1008.5,827.9 1009.5,820.5 1010.5,815.6 1011.4,815.6 1012.4,818.9 1013.4,823.7 1014.4,830.7 1015.4,840.5 1016.4,850.1 1017.4,861.2 1018.4,869.5 1019.3,871.1 1020.3,871.7 1021.3,882.8 1022.3,901.8 1023.3,919.2 1024.3,889 1025.3,865.4 1026.3,846.8 1027.3,832.9 1028.2,821.7 1029.2,815.2 1030.2,811.1 1031.2,808 1032.2,806.5 1033.2,807.3 1034.2,810.2 1035.2,814.6 1036.1,821.7 1037.1,834.6 1038.1,845.9 1039.1,853.9 1040.1,860.3 1041.1,848 1042.1,838.2 1043.1,832.3 1044.1,827.8 1045.1,824.8 1046.1,824.2 1047.1,824.9 1048.1,826.1 1049.2,827.4 1050.2,828.4 1051.2,829.2 1052.2,830 1053.2,831.2 1054.2,834.4 1055.2,842.7 1056.2,850.4 1057.2,855.8 1058.2,860.3 1059.2,848.5 1060.2,838.7 1061.2,831.4 1062.3,824.9 1063.3,820.3 1064.3,819.5 1065.3,821.2 1066.3,824.2 1067.3,828.4 1068.3,837.2 1069.4,847.3 1070.4,858.4 1071.4,867.8 1072.4,874.5 1073.4,866.6 1074.4,858.3 1075.4,848.5 1076.5,838.6 1077.5,835.4 1078.5,833.7 1079.5,833.1 1080.5,836.2 1081.5,842.1 1082.5,848.2 1083.6,855.7 1084.6,862.7 1085.6,868.2 1086.6,872.7 1087.6,864.9 1088.6,858.3 1089.6,853.4 1090.5,849 1091.5,845.7 1092.5,844.8 1093.5,845.2 1094.5,846.2 1095.5,847.5 1096.5,852.4 1097.5,859.9 1098.4,869.2 1099.4,879.4 1100.4,887.8 1101.4,895.2 1102.4,886.2 1103.5,876.2 1104.5,864 1105.5,852.2 1106.6,844.6 1107.6,838.8 1108.6,835.1 1109.6,832.5 1110.7,830.8 1111.7,832.1 1112.7,841.7 1113.8,859.8 1114.8,892.6 1115.8,878.4 1116.8,866.5 1117.8,857.4 1118.8,848.9 1119.8,839.6 1120.8,835.7 1121.8,833 1122.8,831.9 1123.8,832 1124.8,832.3 1125.8,833.5 1126.8,835.7 1127.8,834.7 1128.8,833.8 1129.8,832.8 1130.8,831.8 1131.8,830.6 1132.7,829.5 1133.7,829.7 1134.7,833.3 1135.7,838.6 1136.7,845 1137.7,853.8 1138.7,852.3 1139.7,848.7 1140.6,844 1141.6,834.3 1142.6,828.4 1143.6,826 1144.6,824.7 1145.5,826.3 1146.5,833 1147.5,842.7 1148.5,856.1 1149.5,869.2 1150.4,882.2 1151.4,891.7 1152.4,898.6 1153.4,890.5 1154.4,881.8 1155.4,872 1156.4,861.5 1157.4,852.2 1158.4,843.2 1159.4,835.2 1160.4,829.1 1161.4,824.3 1162.5,820.8 1163.5,820.4 1164.5,822.4 1165.5,825.7 1166.5,829.6 1167.5,837.1 1168.5,846.6 1169.5,852.5 1170.5,854.3 1171.5,855.1 1172.5,837 1173.5,820.5 1174.5,803.9 1175.5,795.9 1176.5,792.7 1177.6,795.8 1178.6,804 1179.6,819 1180.6,832.1 1181.6,839.6 1182.6,826.9 1183.6,815.4 1184.5,803.7 1185.5,795.6 1186.5,793 1187.5,791.8 1188.5,792.7 1189.4,795.2 1190.4,799.4 1191.4,806 1192.4,801.5 1193.5,797.5 1194.5,793.9 1195.6,790.2 1196.6,787.1 1197.6,785.4 1198.7,785.4 1199.7,785.8 1200.8,786.9 1201.8,789.2 1202.8,787.8 1203.7,787.1 1204.7,786.7 1205.7,786.6 1206.6,787.8 1207.6,796.6 1208.6,808 1209.5,824 1210.5,840.5 1211.5,853.2 1212.4,864.3 1213.4,873.7 1214.4,852.6 1215.4,835.9 1216.4,823.6 1217.4,813.8 1218.4,807 1219.4,801.7 1220.4,797.7 1221.4,795.5 1222.4,794.3 1223.3,793.4 1224.3,793.1 1225.3,795.4 1226.3,800.4 1227.3,805.9 1228.3,813.4 1229.3,821 1230.3,827.6 1231.3,833.5 1232.3,837.8 1233.3,840.9 1234.3,824.7 1235.3,809.9 1236.3,795.6 1237.3,782.7 1238.3,774.1 1239.3,768 1240.3,764 1241.3,761.9 1242.3,760.4 1243.3,760.1 1244.3,762.5 1245.3,767.1 1246.3,772.1 1247.4,776.5 1248.4,781.4 1249.4,786.3 1250.4,789.7 1251.4,790.7 1252.4,791 1253.4,791.2 1254.4,791.6 1255.4,792.9 1256.4,796.8 1257.4,800.8 1258.4,803.6 1259.4,806 1260.4,786.8 1261.3,773.7 1262.3,765 1263.3,759 1264.2,756.8 1265.2,755.8 1266.2,755.9 1267.1,761.6 1268.1,771.1 1269,783.9 1270,802.3 1271,827.7 1271.9,851.1 1272.9,864.2 1273.9,831.9 1274.9,806 1275.9,798.5 1276.9,801.2 1277.9,805.3 1278.9,812.6 1279.9,820.3 1280.9,825.9 1281.9,830.6 1282.9,817.8 1283.9,806.7 1284.9,796.5 1285.9,788 1286.8,782.6 1287.8,778.3 1288.8,776.3 1289.8,776.3 1290.8,776.3 1291.8,776.5 1292.8,779.1 1293.8,783.6 1294.7,790.3 1295.7,801 1296.7,808.7 1297.7,812.2 1298.7,813.8 1299.7,808.9 1300.7,806.4 1301.7,806.4 1302.7,809.4 1303.8,813.3 1304.8,816.5 1305.8,819.8 1306.8,823.2 1307.8,826.7 1308.8,825.7 1309.8,824.4 1310.8,823 1311.8,821.4 1312.8,818.9 1313.8,816.6 1314.7,817.6 1315.7,824.5 1316.7,833.8 1317.7,844.7 1318.7,857 1319.7,867 1320.7,875.8 1321.7,853.8 1322.7,844 1323.7,841.2 1324.7,842.7 1325.7,850.7 1326.7,864.8 1327.7,881 1328.7,888.2 1329.7,870.5 1330.6,855.4 1331.6,842 1332.6,832.2 1333.5,824.3 1334.5,818.7 1335.5,816.8 1336.4,815.9 1337.4,818 1338.3,825.6 1339.3,833.7 1340.3,842.6 1341.2,848 1342.2,851.2 1343.2,840.7 1344.2,833.5 1345.1,828.2 1346.1,824.6 1347.1,824.8 1348.1,829 1349,834.1 1350,838.7 1351,843.5 1352,832.3 1353,823.9 1354.1,817 1355.1,812 1356.1,812.7 1357.1,821.9 1358.1,832.7 1359.1,845.1 1360.2,858.7 1361.2,873.1 1362.2,888.7 1363.2,870.2 1364.2,856.3 1365.2,847.3 1366.2,840.5 1367.2,836 1368.1,833.1 1369.1,830.9 1370.1,828.6 1371.1,825.6 1372.1,821.3 1373.1,816.8 1374.1,813.2 1375.1,809.8 1376.1,807.5 1377.1,808 1378.1,810.6 1379.1,814 1380,818.3 1381,823.5 1382,828.1 1383,830.9 1384,833.1 1385,834.4 1386,831.2 1386.9,828.4 1387.9,825.9 1388.9,823.3 1389.8,821.6 1390.8,822.9 1391.8,828 1392.7,834.6 1393.7,843.5 1394.7,853.8 1395.6,863 1396.6,871.9 1397.6,852.5 1398.6,842 1399.5,835.8 1400.5,833.1 1401.5,832.7 1402.5,832.4 1403.5,832.2 1404.4,831.9 1405.4,830.7 1406.4,828.9 1407.4,827.3 1408.3,826.7 1409.3,827.7 1410.3,829.7 1411.3,832.2 1412.3,834.8 1413.2,837.7 1414.2,841.1 1415.2,844.8 1416.2,840.7 1417.2,836.8 1418.2,833.2 1419.2,829.7 1420.2,826.2 1421.3,823 1422.3,820.6 1423.3,819.1 1424.3,817.9 1425.3,817 1426.3,816.1 1427.3,815.3 1428.3,814.3 1429.3,813.1 1430.4,812.2 1431.4,811.7 1432.4,812.6 1433.4,815.5 1434.4,825.1 1435.4,846.8 1436.4,834.4 1437.4,822.1 1438.3,809.1 1439.3,798.1 1440.3,789.8 1441.3,783.2 1442.3,778.7 1443.2,775 1444.2,772.2 1445.2,771.1 1446.2,772.3 1447.1,775.3 1448.1,779.4 1449.1,784.8 1450.1,792.9 1451.1,803.4 1452,815.8 1453,822.8 1454,826.7 1455,817.1 1456,809.1 1457,802.2 1458.1,796.4 1459.1,793.8 1460.1,792.2 1461.1,791.1 1462.1,790.6 1463.1,790.6 1464.1,791.4 1465.1,792.5 1466.2,794 1467.2,796 1468.2,799.3 1469.2,803.5 1470.2,808.2 1471.2,814.2 1472.2,821.9 1473.2,829.4 1474.3,834.6 1475.3,838 1476.3,840.7 1477.3,842.2 1478.3,839.2 1479.4,838.3 1480.4,839.8 1481.4,849.5 1482.4,863.4 1483.5,878.9 1484.5,888.2 1485.5,869 1486.5,856 1487.5,847.1 1488.5,842.9 1489.5,840.8 1490.4,838.5 1491.4,834.6 1492.4,829.9 1493.4,824.9 1494.4,820.1 1495.4,815.2 1496.4,810.6 1497.4,806.9 1498.4,803.7 1499.4,801 1500.4,798.7 1501.4,796.5 1502.3,795.2 1503.3,796.6 1504.3,801.5 1505.3,806.5 1506.3,812.3 1507.3,818.9" fill="none" stroke="#6495ed" stroke-width="1" shape-rendering="crispEdges"/><polyline points="152.6,782.7 153.6,732.4 154.6,693 155.6,672.3 156.7,658.9 157.7,649 158.7,642.1 159.7,637.3 160.7,633.2 161.7,629.7 162.7,627 163.7,625.4 164.8,624.7 165.8,624.2 166.8,623.9 167.8,623.7 168.8,624 169.8,625.2 170.8,627.2 171.8,629.7 172.9,633.8 173.9,640.9 174.9,650.3 175.9,661.2 176.9,652.7 177.9,642.8 178.9,631.6 179.9,619.3 180.9,602.4 182,584.5 183,571.7 184,565.3 185,560.3 186,557.9 187,558.9 188,563 189,568.9 190,577.9 191,593.9 192,612 193,627.5 194.1,643.5 195.1,658.7 196.1,669.3 197.1,673.3 198.1,675.8 199.1,676.7 200.1,670.8 201.2,667.1 202.2,665.4 203.3,665.1 204.3,668 205.3,672.9 206.4,678.2 207.4,684.9 208.5,693.1 209.5,702.5 210.5,696.4 211.5,686.2 212.5,673.3 213.5,658.3 214.5,633.3 215.5,608.1 216.4,597.1 217.4,589.9 218.4,584.3 219.4,580.8 220.4,579.7 221.4,581.5 222.4,585.3 223.4,589.9 224.4,595.1 225.4,602 226.4,609.9 227.4,617.9 228.4,625.9 229.3,634.5 230.3,643.2 231.3,651.5 232.3,658.8 233.3,664.7 234.3,669.8 235.3,674.1 236.3,667.8 237.4,663.5 238.4,662.1 239.5,661.4 240.5,661.2 241.5,667.4 242.6,679.1 243.6,691.3 244.7,706.1 245.7,723.2 246.7,695.3 247.7,670.1 248.7,648 249.7,626.2 250.7,606.8 251.7,592.6 252.7,585 253.7,579 254.7,574.2 255.7,570.9 256.6,569.4 257.6,570.7 258.6,574.5 259.6,579.6 260.6,585.2 261.6,592.7 262.6,603.3 263.6,624.2 264.6,650 265.6,670.5 266.6,688.7 267.6,705.1 268.6,695.5 269.6,687.5 270.5,683.4 271.5,680.7 272.5,678.3 273.5,676.5 274.5,675.1 275.4,674.3 276.4,674.2 277.4,677.2 278.4,682.9 279.3,689.9 280.3,699.7 281.3,712.9 282.3,679.5 283.3,658.5 284.3,646 285.3,636.2 286.3,629.8 287.3,627.2 288.3,626.1 289.3,625.5 290.3,626.8 291.2,632 292.2,638.2 293.2,644.3 294.2,651.4 295.2,658.9 296.2,666.3 297.2,673 298.2,678.9 299.2,684.6 300.2,689.8 301.2,694.8 302.2,691.4 303.3,689.4 304.3,688.5 305.4,688.3 306.4,689.2 307.4,695.3 308.5,703.8 309.5,711.3 310.6,719 311.6,727.1 312.6,719.2 313.6,710.9 314.6,702.3 315.7,693.3 316.7,682.2 317.7,670.4 318.7,661.3 319.7,657.6 320.7,655.6 321.8,654.7 322.8,655.3 323.8,657 324.8,659.5 325.8,664.8 326.8,672.3 327.8,680.4 328.9,688 329.9,696.8 330.9,702.3 331.9,703 332.9,703.4 333.9,704.8 335,713.2 336,724.5 337,735 338,746.5 339,730.9 340,717.2 341,708.7 342,706.7 343,705.8 344,705.2 345,704.7 345.9,704.2 346.9,703.5 347.9,702.3 348.9,699.1 349.9,694.3 350.9,689.6 351.9,686.5 352.9,684.3 353.9,682.5 354.9,681.9 355.9,683 356.9,685.5 357.9,688.8 358.9,693.3 359.9,700.4 360.9,708.8 361.9,716.9 362.8,724.5 363.8,732.4 364.8,739.9 365.8,746.1 366.8,751.1 367.8,755.5 368.8,759.2 369.8,762 370.8,759.5 371.8,756 372.8,751.7 373.8,745.8 374.9,739.1 375.9,732.8 376.9,727.6 377.9,722.6 378.9,717.9 379.9,713.4 380.9,709.2 381.9,705.2 383,701.6 384,697.9 385,694.4 386,691.8 387,690.6 388,689.9 389,689.6 390,691.4 391,696.4 392.1,710 393.1,732.4 394.1,754.6 395.1,779.1 396.1,805.9 397.1,764.7 398.1,733.7 399.1,723.7 400.1,719.8 401.1,717.1 402.2,715.4 403.2,714.1 404.2,713.2 405.2,712.5 406.2,711.9 407.2,711.2 408.2,710.4 409.2,709.6 410.2,708.7 411.2,707.8 412.2,706.7 413.2,705.3 414.3,703.5 415.3,699 416.3,687.8 417.3,675.1 418.3,666.9 419.3,664.1 420.3,662 421.3,660.6 422.3,660.1 423.3,662.7 424.3,668.4 425.4,674.7 426.4,683.3 427.4,693.2 428.4,702.2 429.4,709.2 430.4,715.5 431.4,719.5 432.4,721.3 433.4,722.4 434.4,723.3 435.4,724.3 436.4,725.9 437.5,728.8 438.5,733.2 439.5,738.6 440.5,744.6 441.5,752 442.5,760.9 443.5,734.6 444.5,715.6 445.5,702.2 446.4,691.3 447.4,682.5 448.4,675.5 449.4,669.3 450.4,663.8 451.4,659.1 452.4,655.6 453.3,653.5 454.3,652.4 455.3,651.5 456.3,651 457.3,651.6 458.3,654.6 459.3,658.9 460.2,663.5 461.2,669.5 462.2,676.4 463.2,683.6 464.2,690.8 465.2,698.6 466.2,706.5 467.1,713.3 468.1,718.1 469.1,721.9 470.1,724.7 471.1,719 472,716.2 473,715.8 473.9,718.6 474.9,724.8 475.8,733.8 476.8,727.1 477.9,721.5 478.9,716.8 479.9,712.9 481,710.5 482,716.7 483,728.8 484.1,736.6 485.1,741.5 486.1,718.5 487.1,700.8 488.1,692.3 489.1,686.9 490.1,683.2 491.2,681.5 492.2,684.1 493.2,690.8 494.2,699.8 495.2,713 496.2,726.5 497.2,735.8 498.2,740 499.2,742.7 500.2,745.4 501.3,749.6 502.3,758.5 503.3,771 504.3,783.8 505.3,797.6 506.3,812.6 507.3,802.5 508.3,796 509.4,793.9 510.4,792.7 511.4,790.9 512.4,786.2 513.4,777.5 514.4,763.6 515.5,740.7 516.5,729.7 517.5,721.4 518.5,714.9 519.5,709.3 520.5,704.1 521.6,700 522.6,697.2 523.6,695.1 524.6,693.6 525.6,692.9 526.7,693.6 527.7,695.8 528.7,698.8 529.7,703.4 530.7,712.1 531.7,720.8 532.8,725.7 533.8,729.2 534.8,731.2 535.8,730 536.7,729.2 537.7,728.7 538.7,728.6 539.6,729 540.6,729.9 541.6,731.2 542.5,732.6 543.5,734.3 544.5,736.5 545.5,738.9 546.4,741.6 547.4,744.4 548.4,747.5 549.3,750.8 550.3,754.4 551.3,749.2 552.2,745.2 553.2,742.5 554.1,741.5 555.1,741.9 556.1,742.9 557,744.6 558,748.9 558.9,756 559.9,764.8 560.9,756.6 562,750 563,745.7 564,742.3 565.1,740 566.1,739.5 567.1,741.1 568.2,743.6 569.2,745.9 570.2,748.4 571.3,751.3 572.3,754.4 573.3,754.3 574.3,754 575.3,753.5 576.2,752.9 577.2,752.1 578.2,750.3 579.2,746.6 580.2,741.9 581.2,736.9 582.2,731.4 583.1,725.3 584.1,721.5 585.1,719.2 586.1,717.9 587.1,718.3 588.1,721.1 589,724.9 590,728 591,729.1 592,729.7 593,730.1 594,730.9 595,735.1 595.9,745.4 596.9,755.5 597.9,764.1 598.9,772.5 599.9,765 600.9,758.2 601.9,752.1 602.9,745.5 603.9,740.4 604.8,738.9 605.8,739 606.8,739.6 607.8,741.1 608.8,743.7 609.8,748 610.8,745.5 611.7,742.7 612.7,739.5 613.7,736 614.6,732.2 615.6,727.9 616.6,723.2 617.5,717.9 618.5,710.2 619.5,700.9 620.5,693 621.4,689.8 622.4,689.9 623.4,690.8 624.3,693.1 625.3,697.6 626.3,696.2 627.3,694.3 628.3,692 629.2,689.4 630.2,685.1 631.2,679.9 632.2,675.7 633.2,674.3 634.2,675.9 635.1,679.3 636.1,683.6 637.1,688.3 638.1,694.6 639.1,702.1 640.1,710.1 641.1,716.3 642,721.8 643,726.6 644,730.2 645,732.4 646,732.3 647,731.9 647.9,731.2 648.9,730.3 649.9,728.5 650.9,723 651.9,717.4 652.8,713.8 653.8,710.8 654.8,710 655.8,712.3 656.8,715.8 657.7,718.8 658.7,721.6 659.7,724.6 660.7,720.4 661.7,717.8 662.7,716.5 663.7,716.8 664.6,719 665.6,722.5 666.6,726.5 667.6,732.7 668.6,739 669.6,743.2 670.6,746.6 671.6,751.5 672.5,761.2 673.5,774.6 674.5,789.9 675.5,808.7 676.5,830.6 677.5,816.4 678.5,802.5 679.5,788.9 680.5,774.6 681.5,762.6 682.5,754.5 683.5,747.6 684.5,742 685.5,737.9 686.5,734.8 687.5,732 688.5,730.1 689.5,729.3 690.5,731.3 691.5,735.5 692.5,739.8 693.5,745 694.5,750.1 695.5,754.2 696.5,758.1 697.5,761.6 698.5,764.7 699.5,762.6 700.5,760.6 701.5,758.8 702.5,756.6 703.5,754.9 704.5,754.7 705.4,760.8 706.4,769.9 707.4,781.5 708.4,796.6 709.4,814.8 710.4,838 711.4,865.5 712.4,834.9 713.4,812.2 714.3,794.2 715.3,784.1 716.3,781.1 717.2,779.3 718.2,779.9 719.2,791 720.2,803 721.1,806.4 722.1,808.1 723.1,808.7 724.1,792.4 725.1,779.2 726.2,769.9 727.2,762.4 728.2,758.2 729.2,756.4 730.3,755.3 731.3,755.2 732.3,756 733.3,757.3 734.4,759.1 735.4,762.6 736.4,767.2 737.4,771.7 738.4,775.8 739.5,780.1 740.5,785.1 741.5,791.5 742.5,801.2 743.6,812.4 744.6,823.7 745.6,835.8 746.6,818.8 747.6,805.1 748.6,793.8 749.6,784.7 750.5,780.6 751.5,778.7 752.5,778.6 753.5,779.6 754.5,781.3 755.5,783.2 756.5,785 757.5,786.6 758.4,788.1 759.4,789.7 760.4,791.2 761.4,792.8 762.4,794.4 763.4,791.9 764.4,789.6 765.4,787.4 766.4,785.1 767.4,782.7 768.3,780.7 769.3,780.4 770.3,783.6 771.3,789.4 772.3,796.9 773.3,808.4 774.3,822.9 775.3,805.8 776.4,794.8 777.4,787.4 778.4,783.1 779.5,782.4 780.5,782.1 781.5,782.3 782.6,785.9 783.6,792.8 784.6,809.4 785.7,833 786.7,858.6 787.7,827 788.8,802.3 789.8,782.2 790.8,772.8 791.8,767.4 792.9,764.7 793.9,763.9 794.9,763.5 795.9,763.6 797,764.9 798,767.3 799,765.2 800,763.8 801,763.1 802,762.9 803,763.8 804.1,765.5 805.1,767.4 806.1,769 807.1,770.3 808.1,771.6 809.1,773 810.1,774.4 811.1,775.6 812.1,777 813.2,779 814.2,783.4 815.2,793.7 816.2,802.7 817.2,808.4 818.2,812.5 819.2,794 820.3,785.7 821.3,782.9 822.4,781.6 823.4,783.7 824.4,791 825.5,799.1 826.5,808.1 827.6,818.7 828.6,830.6 829.6,799.9 830.6,781.9 831.6,772.8 832.6,767.1 833.6,764.3 834.6,762.4 835.6,760.9 836.6,759.8 837.6,758.6 838.6,757.5 839.5,756.4 840.5,755.6 841.5,755.2 842.5,755.3 843.5,756.9 844.5,759.3 845.5,763.3 846.5,770.1 847.5,780 848.5,798.5 849.5,823.5 850.5,859.1 851.5,823.2 852.5,801.4 853.5,788.5 854.6,780.4 855.6,776.8 856.6,774.6 857.6,773.8 858.6,776.4 859.6,781.5 860.6,787.6 861.7,796.1 862.7,804.6 863.7,811.7 864.7,818.2 865.7,817.8 866.7,816.8 867.7,815.3 868.6,811.3 869.6,804.1 870.6,798.7 871.6,794.8 872.6,791.7 873.6,790.6 874.6,792.9 875.6,797.2 876.5,801.4 877.5,805.6 878.5,810.2 879.5,815.1 880.5,809.6 881.6,805.5 882.6,803.5 883.7,803.5 884.7,804.3 885.8,806.3 886.8,809.9 887.8,808 888.8,805.9 889.8,803.6 890.9,801.2 891.9,798.5 892.9,795.4 893.9,791.6 894.9,787.7 895.9,784.1 896.9,781.7 898,780.1 899,778.8 900,777.7 901,777.1 902,777.1 903,777.8 904,779.1 905.1,780.7 906.1,782.5 907.1,784.6 908.1,787.6 909.1,791.3 910.1,795.8 911.1,802.6 912.2,811.5 913.2,820.4 914.2,829.7 915.2,839.6 916.2,833.2 917.2,827.3 918.2,821.8 919.2,816.3 920.2,811.3 921.3,807.3 922.3,804.6 923.3,802.3 924.3,800.8 925.3,800.4 926.3,802.1 927.3,805.4 928.3,809.1 929.3,813.9 930.4,819.3 931.4,823.6 932.4,826.9 933.4,832.6 934.4,854.9 935.4,892.6 936.4,854.5 937.3,833 938.3,823.2 939.2,817.3 940.2,816.5 941.2,818.2 942.1,821.1 943.1,824.9 944,831.6 945,840.9 946,834.5 947,829.3 947.9,825.5 948.9,822.1 949.9,820.3 950.9,822.2 951.9,827.8 952.8,832.3 953.8,835 954.8,837 955.8,827.3 956.7,818.9 957.7,811.8 958.6,804.7 959.6,800.8 960.6,802.6 961.5,807.5 962.5,813.1 963.4,818.8 964.4,825.4 965.4,816.5 966.4,808 967.3,799.6 968.3,791.3 969.3,783.9 970.3,778 971.3,772.8 972.2,769.4 973.2,767 974.2,765.3 975.2,765.4 976.2,767.5 977.2,770.6 978.1,774.5 979.1,780 980.1,786.8 981.1,796.1 982.1,806.7 983,816.3 984,825.5 985,834.4 986,833.3 987,832 988.1,830.2 989.1,829.5 990.1,835.8 991.1,845.9 992.1,858.3 993.1,873.7 994.2,890.4 995.2,909.2 996.2,930.1 997.2,899.9 998.2,877 999.2,859.1 1000.2,848.5 1001.2,842.5 1002.2,841.1 1003.2,844.2 1004.2,849 1005.2,854 1006.2,860.3 1007.2,843.1 1008.2,830.4 1009.2,822 1010.2,815.6 1011.1,813.9 1012.1,816 1013.1,819.8 1014.1,825.2 1015.1,834.5 1016.1,844.6 1017.1,855.3 1018,866 1019,872.2 1020,876.3 1021,879.3 1022,880.5 1023,874.7 1024,866.5 1024.9,853.9 1025.9,840 1026.9,829.5 1027.9,820.6 1028.9,814.4 1029.8,811 1030.8,808.3 1031.8,806.3 1032.8,805.5 1033.7,806.6 1034.7,810.1 1035.7,815.1 1036.7,826.4 1037.7,840.6 1038.6,851.9 1039.6,862.3 1040.6,871.9 1041.6,857.1 1042.6,845.8 1043.6,838.1 1044.6,831.6 1045.5,828.2 1046.5,828.7 1047.5,831 1048.5,834.1 1049.5,836.6 1050.5,838 1051.5,838.8 1052.5,839.6 1053.4,840.9 1054.4,843.9 1055.4,855.6 1056.4,869.9 1057.4,886.1 1058.4,867.1 1059.4,852.4 1060.4,840 1061.4,831.1 1062.4,827.3 1063.4,825 1064.4,824.1 1065.4,824.7 1066.5,826 1067.5,827.5 1068.5,828.8 1069.5,830 1070.5,831.3 1071.5,832.8 1072.5,834.4 1073.5,836.4 1074.5,838.5 1075.5,840.9 1076.5,837.3 1077.5,835.4 1078.5,834.6 1079.5,834.4 1080.6,836.6 1081.6,840.8 1082.6,845.1 1083.6,849.2 1084.6,853.8 1085.6,845.9 1086.6,839.7 1087.6,835.7 1088.6,834.4 1089.6,835.6 1090.6,838.1 1091.6,840.7 1092.6,842.7 1093.6,844.2 1094.6,845.6 1095.6,846.8 1096.6,847.7 1097.6,848.2 1098.6,848.7 1099.6,849.4 1100.6,851.2 1101.6,856.8 1102.6,864.7 1103.6,876.8 1104.6,890.4 1105.6,898.6 1106.6,904.2 1107.6,890.2 1108.6,878.9 1109.6,868.4 1110.6,861.1 1111.6,861.1 1112.6,865.4 1113.6,881.5 1114.6,917 1115.6,954.7 1116.6,924.2 1117.6,893.6 1118.6,866.3 1119.6,860.6 1120.6,857.5 1121.6,855 1122.6,852.8 1123.6,851 1124.6,849.2 1125.6,847.1 1126.6,844.4 1127.7,841.4 1128.7,838.6 1129.7,836.5 1130.7,834.7 1131.7,833.1 1132.7,832.1 1133.7,832 1134.7,832.8 1135.7,834.1 1136.7,836 1137.7,839.3 1138.7,843.6 1139.7,848.7 1140.7,845.6 1141.7,843.2 1142.7,841.8 1143.7,840.7 1144.7,839.9 1145.6,839.6 1146.6,842 1147.6,847.8 1148.6,854.1 1149.6,859.2 1150.6,864.2 1151.6,853.7 1152.6,843.2 1153.6,831.7 1154.6,820.7 1155.6,814.3 1156.6,809.9 1157.6,806.7 1158.6,805.5 1159.6,806.7 1160.6,809.4 1161.6,812.6 1162.6,817.7 1163.6,823.4 1164.6,827.9 1165.6,831.1 1166.6,834 1167.6,837.2 1168.6,841.6 1169.6,847.8 1170.6,854.1 1171.6,858.9 1172.6,862.9 1173.6,839.9 1174.5,820.8 1175.5,804.3 1176.5,802.2 1177.4,802.6 1178.4,803.3 1179.4,806.1 1180.3,811.7 1181.3,817.4 1182.3,822.8 1183.2,828.4 1184.2,834.4 1185.2,820.3 1186.2,809.5 1187.2,801.6 1188.2,795.5 1189.2,792.6 1190.2,791.4 1191.2,790.5 1192.2,789.7 1193.2,788.6 1194.2,787.4 1195.2,786.1 1196.2,784.6 1197.2,783.1 1198.2,781.3 1199.1,779.5 1200.1,778 1201.1,777 1202.1,776.1 1203.1,775.6 1204.1,775.8 1205.1,777.8 1206.1,781.1 1207.1,787.9 1208.1,799.7 1209.1,818.4 1210.1,841.2 1211.1,858 1212.1,871.9 1213.1,850.4 1214.1,829.4 1215.2,806.6 1216.2,791.4 1217.2,782.9 1218.2,777.4 1219.2,775.1 1220.2,773.7 1221.3,773.2 1222.3,774.7 1223.3,778 1224.3,783.7 1225.3,795.9 1226.4,809.3 1227.4,821.7 1228.4,834.4 1229.3,823.1 1230.3,813 1231.2,803.2 1232.2,794.5 1233.1,789.3 1234,786.6 1235,788.8 1235.9,795.7 1236.9,784.5 1237.9,775.7 1238.9,769.2 1239.9,764.1 1240.9,761.4 1241.9,759.8 1242.9,758.9 1243.9,760.1 1244.9,763.7 1245.9,768.1 1246.9,774.1 1247.9,780.6 1248.9,785.5 1249.9,789.7 1250.9,793.1 1252,784.6 1253,777.6 1254.1,771.8 1255.2,767.8 1256.2,772.9 1257.3,784.2 1258.3,793.2 1259.4,802.1 1260.4,783.5 1261.4,770.3 1262.4,760.7 1263.4,756.2 1264.4,754.3 1265.4,754 1266.4,757.2 1267.4,762.6 1268.4,769.2 1269.3,778.3 1270.3,788.3 1271.3,798.6 1272.3,809.7 1273.3,821.7 1274.3,835.4 1275.3,848 1276.3,857 1277.3,864.6 1278.3,873.7 1279.3,885.6 1280.3,851 1281.3,832.7 1282.4,820.4 1283.4,812.7 1284.4,807.3 1285.4,803.9 1286.4,803 1287.5,802.7 1288.5,802.5 1289.5,802.2 1290.5,801.7 1291.6,801.1 1292.6,800.5 1293.6,800.3 1294.6,803.9 1295.6,811.5 1296.7,824 1297.7,837.8 1298.7,849.9 1299.7,829.7 1300.7,814.9 1301.7,805.6 1302.7,798.8 1303.7,794.7 1304.7,791.8 1305.7,789.8 1306.7,789.2 1307.7,789.7 1308.7,790.7 1309.7,791.9 1310.7,794.4 1311.7,798.1 1312.7,802.5 1313.7,807.3 1314.7,813.3 1315.7,820.4 1316.7,828.6 1317.7,839.3 1318.7,858.7 1319.7,880.4 1320.7,891.3 1321.7,874.8 1322.7,864.4 1323.6,857.9 1324.6,855.1 1325.6,860.6 1326.5,870.2 1327.5,878 1328.5,886.1 1329.5,873.8 1330.5,863.5 1331.5,854.5 1332.5,847 1333.5,841.2 1334.5,836.1 1335.6,834.5 1336.6,837.2 1337.6,842.4 1338.6,848.4 1339.6,856.7 1340.6,866.8 1341.6,858.2 1342.7,850.1 1343.7,842.2 1344.7,834.9 1345.8,829.8 1346.8,826 1347.8,825.5 1348.9,826.4 1349.9,829.3 1350.9,825.6 1351.9,821.4 1352.9,816.8 1353.9,811.2 1354.9,806.5 1355.9,803.5 1357,802.1 1358,805.4 1359,810.7 1360,814.6 1361,818.3 1362,822 1363,825.4 1364,822.6 1364.9,820.6 1365.9,819.3 1366.9,818.9 1367.8,819.3 1368.8,820.4 1369.8,822.2 1370.7,827.1 1371.7,833 1372.7,837.1 1373.6,840.6 1374.6,843.5 1375.6,842.7 1376.6,842 1377.6,841.4 1378.6,840.9 1379.6,840.4 1380.5,840 1381.5,839.7 1382.5,839.6 1383.5,840.3 1384.5,841.7 1385.5,843.5 1386.5,837.2 1387.5,830.4 1388.4,822 1389.4,813 1390.4,807.3 1391.4,803.4 1392.3,801 1393.3,800.9 1394.3,801.3 1395.3,802.1 1396.3,805.4 1397.2,811.8 1398.2,818.4 1399.2,826 1400.2,832.8 1401.1,836.9 1402.1,840 1403.1,841.7 1404.1,838.9 1405.1,837.3 1406.1,837.1 1407.1,838.1 1408.1,839.5 1409.1,841.1 1410.1,843.2 1411.1,845.8 1412.1,848.7 1413.1,848.2 1414.1,846.9 1415.1,845.1 1416,842.2 1417,837.5 1418,832.3 1419,827.5 1420,822.6 1421,817.7 1421.9,813.3 1422.9,809.7 1423.9,806.4 1424.9,803.6 1425.9,801.4 1426.9,800.1 1427.8,799.1 1428.8,798.4 1429.8,798.2 1430.8,799 1431.8,800.8 1432.8,803.3 1433.7,808.2 1434.7,816 1435.7,824.1 1436.7,833.1 1437.7,819.2 1438.7,805.2 1439.8,789.8 1440.8,778.8 1441.8,772 1442.8,767.5 1443.8,765 1444.8,763.4 1445.9,763.9 1446.9,766.4 1447.9,770.3 1448.9,778.2 1449.9,789.6 1451,805.2 1452,817.9 1453,828 1454,825.5 1455,820.2 1456,809.2 1457,801.1 1458,795.8 1459,792.3 1460,790.6 1461,789.3 1462,788.5 1463,788.4 1463.9,788.7 1464.9,789.2 1465.9,789.7 1466.9,790.4 1467.9,791.5 1468.9,792.7 1469.9,794 1470.9,795 1471.9,796 1472.9,796.9 1473.9,795.4 1474.9,794 1475.9,792.4 1476.9,790.7 1477.9,792.1 1478.9,798.4 1479.9,803.8 1480.9,808.9 1481.9,813.8 1482.9,812.3 1483.9,811.5 1484.9,811.2 1485.9,811.3 1487,815 1488,821.5 1489,827.5 1490,833.9 1491,840.9 1492,831.1 1493,822.1 1494,813 1495.1,807.8 1496.1,805.2 1497.1,805.5 1498.1,812.3 1499.1,818.5 1500.1,824.1 1501.1,827.8 1502.2,828.6 1503.2,829.4 1504.2,831.8 1505.2,835.7 1507.3,824.1" fill="none" stroke="#ffff00" stroke-width="1" shape-rendering="crispEdges"/></svg><svg class="abs" style="left:0;top:0;will-change:transform" width="1507" height="1006" viewBox="0 0 1507 1006"><text class="ax" x="147.5" y="579.6" font-size="9.8" text-anchor="end" letter-spacing="1.5">80.0</text><text class="ax" x="147.5" y="622.6" font-size="9.8" text-anchor="end" letter-spacing="1.5">70.0</text><text class="ax" x="147.5" y="665.6" font-size="9.8" text-anchor="end" letter-spacing="1.5">60.0</text><text class="ax" x="147.5" y="708.6" font-size="9.8" text-anchor="end" letter-spacing="1.5">50.0</text><text class="ax" x="147.5" y="751.6" font-size="9.8" text-anchor="end" letter-spacing="1.5">40.0</text><text class="ax" x="147.5" y="794.6" font-size="9.8" text-anchor="end" letter-spacing="1.5">30.0</text><text class="ax" x="147.5" y="837.6" font-size="9.8" text-anchor="end" letter-spacing="1.5">20.0</text><text class="ax" x="147.5" y="880.6" font-size="9.8" text-anchor="end" letter-spacing="1.5">10.0</text><text class="ax" x="147.5" y="922.6" font-size="9.8" text-anchor="end" letter-spacing="1.5">0.0</text><text class="ax" x="153.3" y="972.7" font-size="9.8" text-anchor="middle" letter-spacing="1.5">0</text><text class="ax" x="361.5" y="972.7" font-size="9.8" text-anchor="middle" letter-spacing="1.5">1,000</text><text class="ax" x="569.7" y="972.7" font-size="9.8" text-anchor="middle" letter-spacing="1.5">2,000</text><text class="ax" x="777.9" y="972.7" font-size="9.8" text-anchor="middle" letter-spacing="1.5">3,000</text><text class="ax" x="986.1" y="972.7" font-size="9.8" text-anchor="middle" letter-spacing="1.5">4,000</text><text class="ax" x="1194.3" y="972.7" font-size="9.8" text-anchor="middle" letter-spacing="1.5">5,000</text><text class="ax" x="1402.5" y="972.7" font-size="9.8" text-anchor="middle" letter-spacing="1.5">6,000</text><text class="ax" x="854.5" y="992" font-size="11.5" letter-spacing="0.18" text-anchor="middle">Fréquence (Hz)</text><text class="ax" x="0" y="0" font-size="11.5" letter-spacing="0.2" text-anchor="middle" transform="translate(114 756.5) rotate(-90)">Amplitude (dB)</text></svg><div class="abs" style="left:87px;top:510px;width:1420px;height:17px;background:#b8b8b8;box-sizing:border-box;border-top:1px solid #c8c8c8;border-bottom:1px solid #c6c6c6"></div><div class="abs" style="left:87px;top:527px;width:1420px;height:2px;background:#3a3a3a"></div><div class="abs" style="left:87px;top:510px;width:17px;height:17px;background:#6e6e6e;box-sizing:border-box;border-top:1px solid #a8a8a8;border-left:1px solid #a8a8a8;border-right:2px solid #000;border-bottom:2px solid #000"></div><svg class="abs" style="left:87px;top:510px" width="17" height="17"><path d="M11.3 4.6V12.4L6.8 8.5Z" fill="#000"/></svg><div class="abs" style="left:900px;top:510px;width:120px;height:17px;background:#6e6e6e;box-sizing:border-box;border-top:1px solid #a8a8a8;border-left:1px solid #a8a8a8;border-right:2px solid #000;border-bottom:2px solid #000"></div><div class="hdr" style="left:87px;top:529px;width:1420px;height:16px"><div class="ib" style="left:1px"></div><svg class="abs" style="left:2px;top:4px" width="9" height="8"><path d="M1 3.5H3.5L5.5 5.5H8M4.5 1V2.5M4.5 6V7.5" stroke="#000" stroke-width="1" fill="none"/></svg><span class="t r" style="left:15px;color:#6495ed;line-height:15px;font-size:10.9px;top:0">[05][298] ap07a1s04_-ism_2_80000_48_EXT_48.wav</span><span class="t r" style="left:279.5px;color:#ffff00;line-height:15px;font-size:10.9px;top:0">[05][301] ap07a1s04_-ism_2_80000_48_EXT_48.wav</span></div><div class="abs" style="left:87px;top:1002px;width:1420px;height:4px;background:#b8b8b8;box-sizing:border-box;border-top:1px solid #c8c8c8"></div><div class="abs" style="left:87px;top:1002px;width:17px;height:17px;background:#6e6e6e;box-sizing:border-box;border-top:1px solid #a8a8a8;border-left:1px solid #a8a8a8;border-right:2px solid #000;border-bottom:2px solid #000"></div><div class="abs" style="left:104px;top:1002px;width:51px;height:17px;background:#6e6e6e;box-sizing:border-box;border-top:1px solid #a8a8a8;border-left:1px solid #a8a8a8;border-right:2px solid #000;border-bottom:2px solid #000"></div><svg class="abs" style="left:0;top:0" width="1507" height="1006"><path d="M207.3 547.5C207.1 547.9 206.3 549.1 206.3 550.0C206.3 550.9 206.6 551.9 207.2 553.0C207.8 554.1 208.9 555.5 210.0 556.5C211.1 557.5 212.0 558.3 213.5 559.2C215.0 560.1 215.3 560.1 218.9 562.1C222.5 564.1 229.5 568.2 234.8 571.2C240.1 574.2 245.4 577.0 250.7 579.8C256.0 582.6 261.4 585.2 266.7 587.9C272.0 590.6 277.3 593.4 282.6 596.1C287.9 598.8 293.2 601.6 298.5 604.3C303.8 607.0 309.0 609.6 314.4 612.5C319.8 615.4 323.9 617.2 331.0 621.5C338.1 625.8 348.2 631.8 356.8 638.0C365.4 644.2 375.8 652.9 382.7 658.6C389.6 664.3 392.5 666.8 398.0 672.0C403.5 677.2 408.6 681.7 415.9 689.8C423.2 697.9 435.5 712.4 441.7 720.8C447.9 729.2 449.8 734.4 453.3 740.0C456.8 745.6 459.7 748.2 462.8 754.2C465.9 760.2 469.7 768.8 472.2 775.9C474.7 783.0 476.6 789.5 477.9 796.7C479.2 803.9 480.0 811.8 480.2 819.3C480.4 826.8 480.0 834.8 478.8 842.0C477.6 849.2 475.9 856.3 473.2 862.8C470.5 869.2 467.1 875.4 462.8 880.7C458.6 886.1 453.4 890.8 447.7 894.9C442.0 899.0 435.1 902.6 428.8 905.3C422.5 908.0 416.2 909.7 409.9 911.0C403.6 912.3 397.9 913.0 391.0 913.2C384.1 913.4 376.8 913.0 368.3 912.3C359.8 911.6 351.4 910.9 340.0 909.0C328.6 907.1 312.5 903.7 300.0 901.0C287.5 898.3 276.7 895.9 265.0 892.7C253.3 889.5 241.0 885.6 230.0 882.0C219.0 878.4 208.2 874.8 199.0 871.0C189.8 867.2 183.3 863.7 175.0 859.0C166.7 854.3 156.9 847.9 149.0 843.0C141.1 838.1 134.9 834.3 127.7 829.4C120.5 824.5 113.1 819.1 106.0 813.4C98.9 807.7 92.0 801.9 85.0 795.0C78.0 788.1 69.1 778.3 63.8 772.0C58.5 765.7 56.4 762.5 53.0 757.0C49.6 751.5 46.9 745.6 43.4 738.8C39.9 732.0 35.4 723.2 32.0 716.0C28.6 708.8 25.7 702.6 22.8 695.4C19.9 688.1 17.2 680.1 14.9 672.5C12.6 664.9 10.5 656.6 9.1 649.7C7.6 642.9 6.9 637.5 6.2 631.4C5.5 625.3 5.1 618.7 5.0 613.0C4.9 607.3 5.0 602.3 5.7 597.0C6.4 591.7 7.4 585.5 9.1 581.0C10.8 576.5 13.0 573.1 16.0 569.7C19.1 566.3 22.4 563.3 27.4 560.6C32.4 557.9 38.9 555.6 45.7 553.7C52.6 551.8 60.9 550.3 68.5 549.0C76.1 547.7 81.5 546.6 91.4 545.7C101.3 544.8 116.6 544.1 128.0 543.8C139.4 543.4 148.8 543.6 160.0 543.6C171.2 543.6 181.2 543.8 195.0 544.0C208.8 544.2 230.9 544.6 242.8 545.0C254.8 545.4 260.1 546.0 266.7 546.5C273.3 547.0 278.5 547.5 282.6 548.1C286.7 548.7 289.9 549.7 291.3 550.0" fill="none" stroke="#0048dc" stroke-width="6.9" stroke-linecap="round" stroke-linejoin="round"/></svg>
</body></html>
